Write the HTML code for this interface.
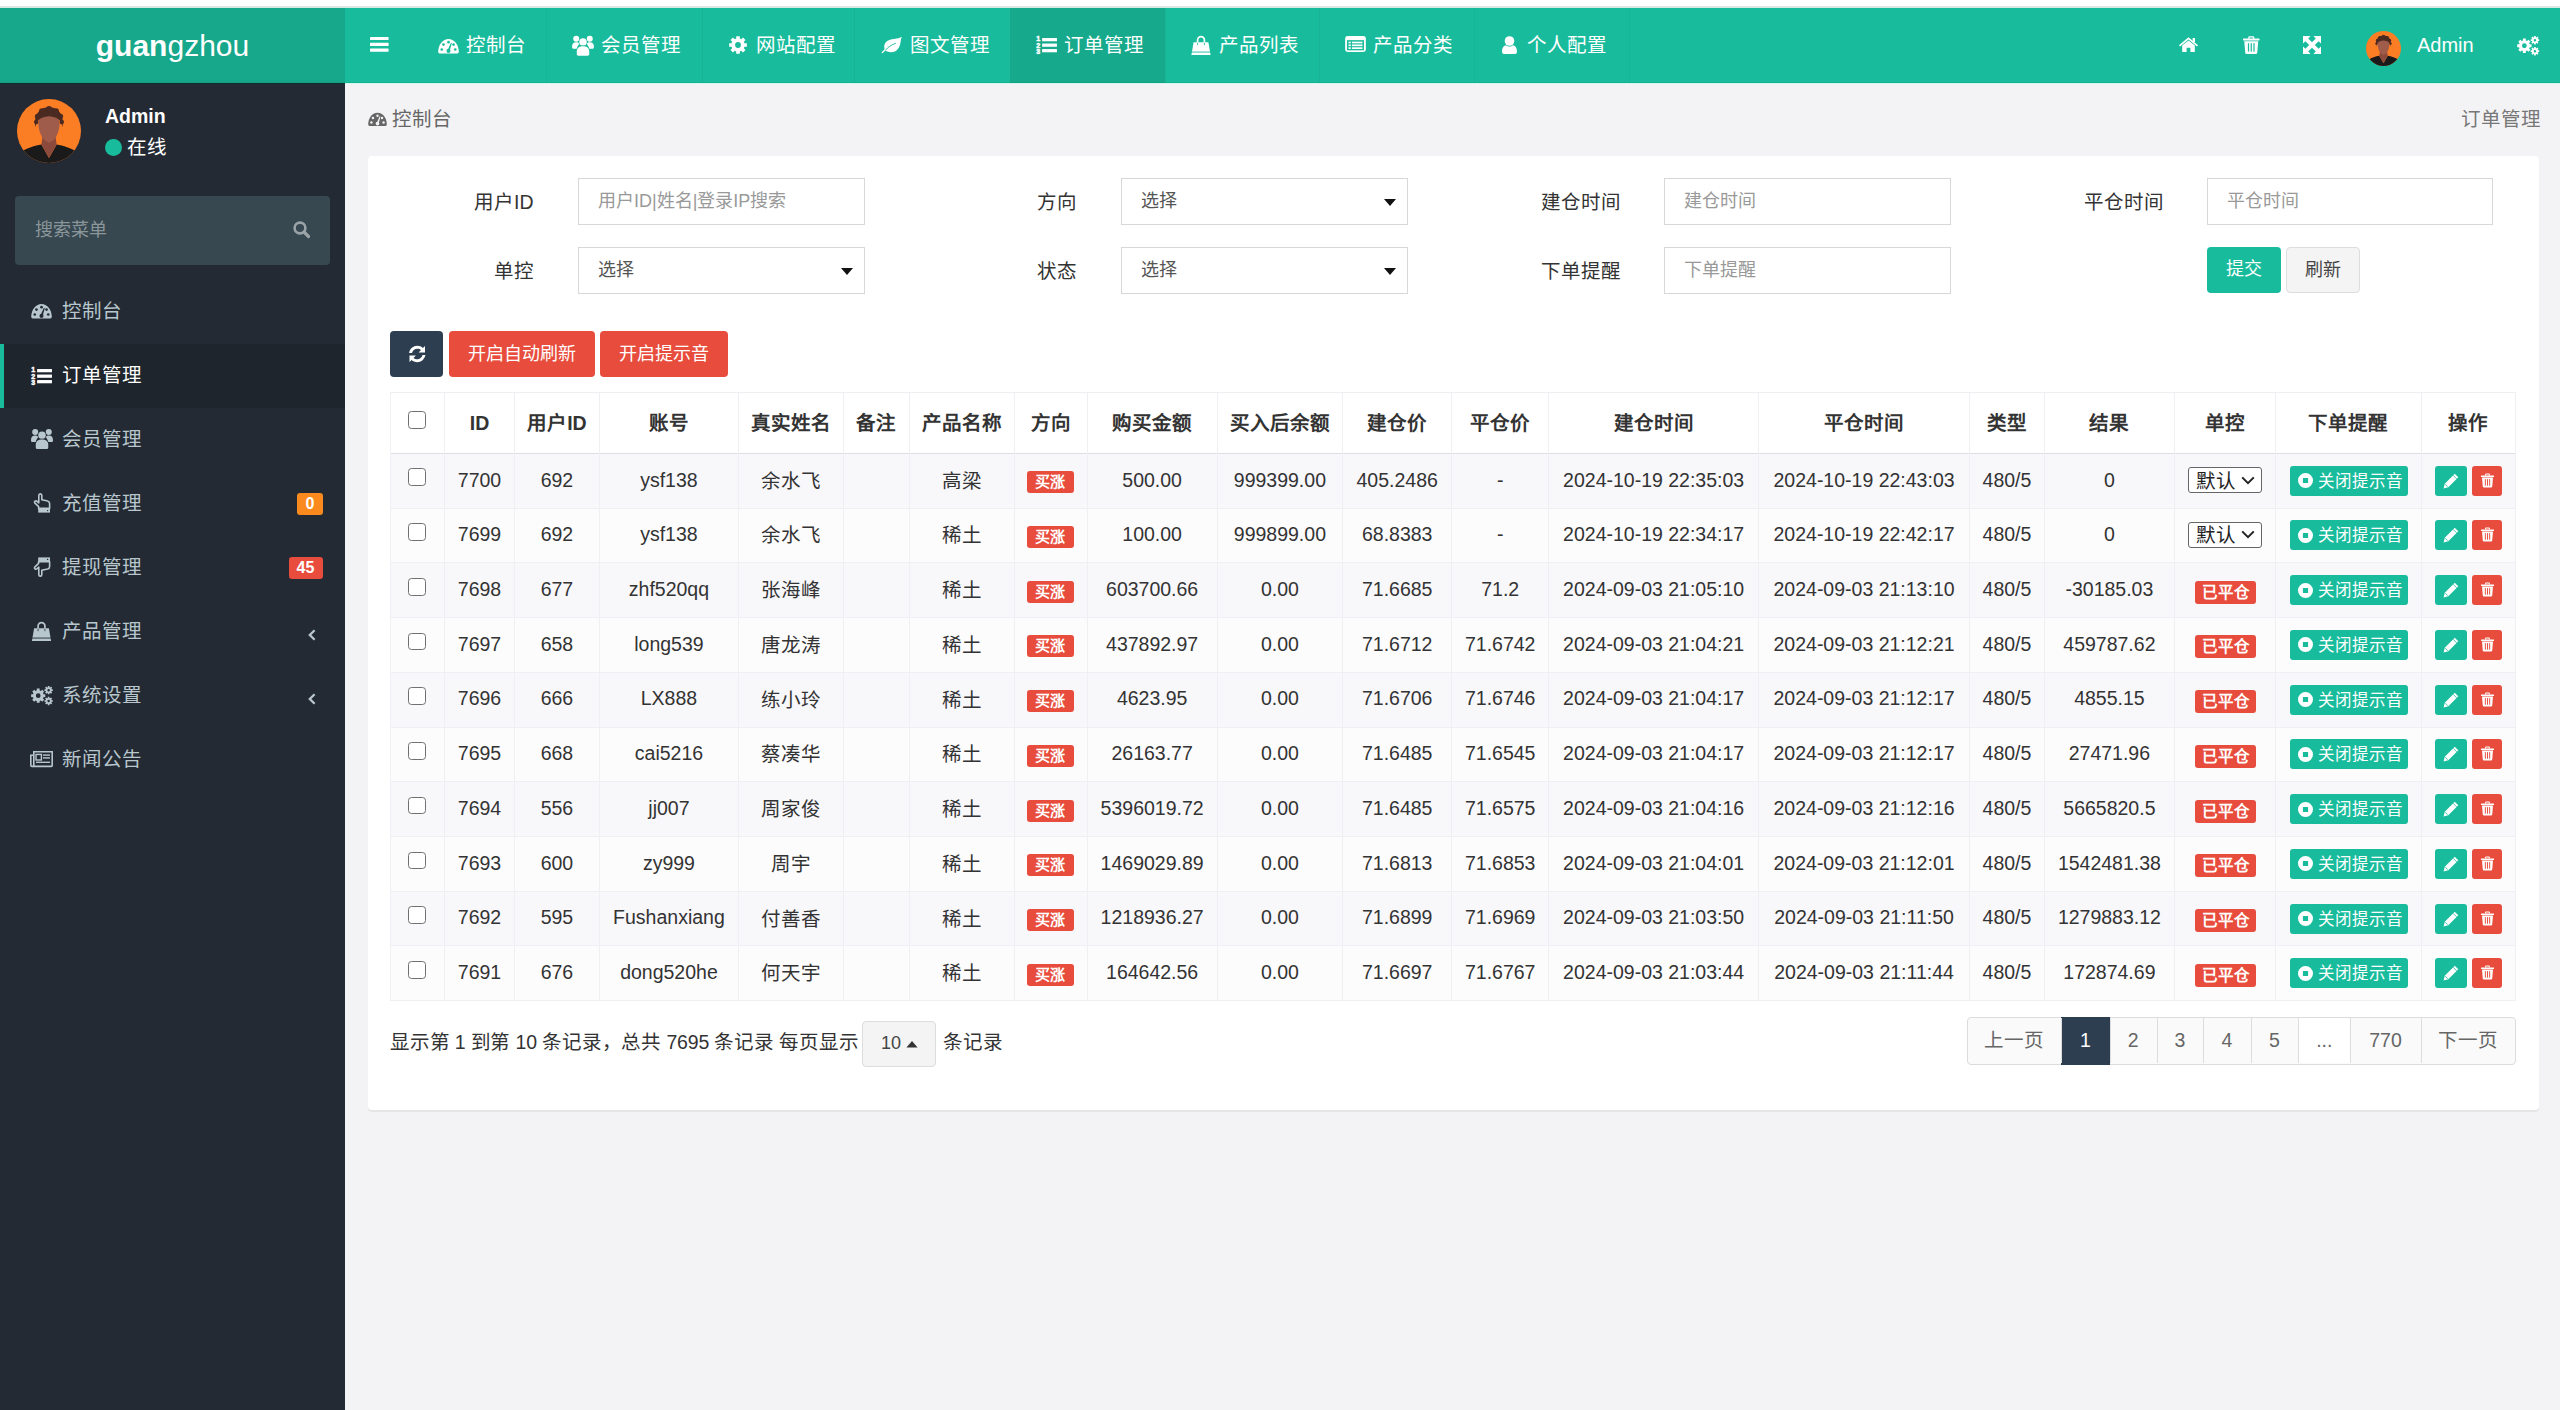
<!DOCTYPE html><html lang="zh-CN"><head><meta charset="utf-8"><title>订单管理</title><style>
*{box-sizing:border-box;margin:0;padding:0}
html,body{width:2560px;height:1410px;overflow:hidden}
body{font-family:"Liberation Sans",sans-serif;font-size:19.5px;color:#333;background:#f3f3f5;position:relative}
.a{position:absolute}
.t{position:absolute;white-space:nowrap}
</style></head><body>
<div class="a" style="left:0;top:0;width:2560px;height:8px;background:#fff"></div>
<div class="a" style="left:0;top:6px;width:2560px;height:1px;background:#e2e2e2"></div>
<div class="a" style="left:0;top:7px;width:2560px;height:1px;background:#cfeee7"></div>
<div class="a" style="left:0;top:8px;width:345px;height:75px;background:#17a78a"></div>
<div class="a" style="left:345px;top:8px;width:2215px;height:75px;background:#18bc9c"></div>
<div class="a" style="left:1010px;top:8px;width:155px;height:75px;background:#16a98c"></div>
<div class="a" style="left:546px;top:8px;width:1px;height:75px;background:rgba(0,0,0,0.035)"></div>
<div class="a" style="left:702px;top:8px;width:1px;height:75px;background:rgba(0,0,0,0.035)"></div>
<div class="a" style="left:854px;top:8px;width:1px;height:75px;background:rgba(0,0,0,0.035)"></div>
<div class="a" style="left:1165px;top:8px;width:1px;height:75px;background:rgba(0,0,0,0.035)"></div>
<div class="a" style="left:1319px;top:8px;width:1px;height:75px;background:rgba(0,0,0,0.035)"></div>
<div class="a" style="left:1474px;top:8px;width:1px;height:75px;background:rgba(0,0,0,0.035)"></div>
<div class="a" style="left:1629px;top:8px;width:1px;height:75px;background:rgba(0,0,0,0.035)"></div>
<div class="t" style="left:0;top:8px;width:345px;text-align:center;color:#fff;font-size:30px;line-height:75px"><b>guan</b>gzhou</div>
<div class="a" style="left:369.6px;top:37.4px"><svg width="18.6" height="14.7" viewBox="0 0 18.6 14.7" style="display:block;overflow:visible" ><g fill="#fff"><rect x="0" y="0" width="18.6" height="3.1" rx="0.5"/><rect x="0" y="5.8" width="18.6" height="3.1" rx="0.5"/><rect x="0" y="11.6" width="18.6" height="3.1" rx="0.5"/></g></svg></div>
<div class="a" style="left:437.7px;top:37.7px"><svg width="21" height="16" viewBox="0 0 28 21" style="display:block;overflow:visible" ><path fill="#fff" d="M2.2 20.6 Q0.2 20.6 0.3 17.5 C0.8 7.6 6.8 1 14 1 C21.2 1 27.2 7.6 27.7 17.5 Q27.8 20.6 25.8 20.6 Z"/><circle cx="5" cy="15.2" r="1.75" fill="#18bc9c"/><circle cx="7.3" cy="8.6" r="1.75" fill="#18bc9c"/><circle cx="14" cy="5.4" r="1.75" fill="#18bc9c"/><circle cx="20.7" cy="8.6" r="1.75" fill="#18bc9c"/><circle cx="23" cy="15.2" r="1.75" fill="#18bc9c"/><path fill="#18bc9c" d="M12.6 16.6 L17.2 6.2 L18.4 6.7 L15.4 17.4 Z"/><circle cx="14" cy="17" r="2.7" fill="#18bc9c"/></svg></div>
<div class="t" style="left:465.8px;top:34px;color:#fff;font-size:19.5px;line-height:22px">控制台</div>
<div class="a" style="left:571.7px;top:34.5px"><svg width="22" height="21" viewBox="0 0 24 23" style="display:block;overflow:visible" ><g fill="#fff"><circle cx="4.6" cy="4.2" r="3.3"/><circle cx="19.4" cy="4.2" r="3.3"/><path d="M0 13 C0 9.5 1.8 8 4.6 8 C6.5 8 7.6 8.6 8.4 9.5 C6.6 10.8 5.6 12.6 5.4 15 H1.2 C.4 15 0 14.2 0 13 Z"/><path d="M24 13 C24 9.5 22.2 8 19.4 8 C17.5 8 16.4 8.6 15.6 9.5 C17.4 10.8 18.4 12.6 18.6 15 H22.8 C23.6 15 24 14.2 24 13 Z"/></g><circle cx="12" cy="7.6" r="4.9" fill="#18bc9c"/><circle cx="12" cy="7.6" r="4.1" fill="#fff"/><path fill="#18bc9c" d="M4.4 23 V18 C4.4 13.6 7.4 11.4 12 11.4 C16.6 11.4 19.6 13.6 19.6 18 V23 Z"/><path fill="#fff" d="M5.2 21.2 V18 C5.2 14.3 7.8 12.3 12 12.3 C16.2 12.3 18.8 14.3 18.8 18 V21.2 Q18.8 22.8 17.2 22.8 H6.8 Q5.2 22.8 5.2 21.2 Z"/></svg></div>
<div class="t" style="left:600.9px;top:34px;color:#fff;font-size:19.5px;line-height:22px">会员管理</div>
<div class="a" style="left:728.8px;top:35.9px"><svg width="18" height="18" viewBox="0 0 20 20" style="display:block;overflow:visible" ><path fill="#fff" fill-rule="evenodd" d="M7.99 2.88 L8.05 0.19 L11.95 0.19 L12.01 2.88 L13.62 3.54 L15.56 1.69 L18.31 4.44 L16.46 6.38 L17.12 7.99 L19.81 8.05 L19.81 11.95 L17.12 12.01 L16.46 13.62 L18.31 15.56 L15.56 18.31 L13.62 16.46 L12.01 17.12 L11.95 19.81 L8.05 19.81 L7.99 17.12 L6.38 16.46 L4.44 18.31 L1.69 15.56 L3.54 13.62 L2.88 12.01 L0.19 11.95 L0.19 8.05 L2.88 7.99 L3.54 6.38 L1.69 4.44 L4.44 1.69 L6.38 3.54 Z M6.80 10.00 a3.20 3.20 0 1 0 6.40 0 a3.20 3.20 0 1 0 -6.40 0 Z"/></svg></div>
<div class="t" style="left:755.6px;top:34px;color:#fff;font-size:19.5px;line-height:22px">网站配置</div>
<div class="a" style="left:881.4px;top:36px"><svg width="21" height="18" viewBox="0 0 24 21" style="display:block;overflow:visible" ><path fill="#fff" d="M24 1 C22 2.5 19 3 15 3.4 C8 4 3.5 7 3.5 12.5 C3.5 13.6 3.7 14.6 4 15.5 C2.8 16.6 1.6 17.8 0.6 19 C0.2 19.6 0.8 20.4 1.6 20 C2.6 19 3.8 18 5.2 17 C6.8 18.4 9 19 11.4 19 C18.5 19 22 13 22.6 7 C22.9 4.6 23.4 2.6 24 1 Z"/><path fill="none" stroke="#18bc9c" stroke-width="1.1" d="M5 16.5 C8 13 11.5 10.5 17 8.5"/></svg></div>
<div class="t" style="left:909.7px;top:34px;color:#fff;font-size:19.5px;line-height:22px">图文管理</div>
<div class="a" style="left:1036.3px;top:35.4px"><svg width="21" height="19" viewBox="0 0 22 20" style="display:block;overflow:visible" ><g fill="#fff"><rect x="6.4" y="3.2" width="15.6" height="3.4"/><rect x="6.4" y="9" width="15.6" height="3.4"/><rect x="6.4" y="14.8" width="15.6" height="3.4"/><g font-size="7.4" font-weight="bold" font-family="Liberation Sans" stroke="#fff" stroke-width="0.5"><text x="0.2" y="6.8">1</text><text x="0.2" y="13.3">2</text><text x="0.2" y="19.8">3</text></g></g></svg></div>
<div class="t" style="left:1064.4px;top:34px;color:#fff;font-size:19.5px;line-height:22px">订单管理</div>
<div class="a" style="left:1190.7px;top:34.7px"><svg width="20" height="20" viewBox="0 0 20 20" style="display:block;overflow:visible" ><path fill="#fff" d="M2.6 7.2 H17.4 L19.6 20 H0.4 Z"/><path fill="none" stroke="#fff" stroke-width="1.7" d="M6.6 10 V5 A3.4 3.4 0 0 1 13.4 5 V10"/><path fill="none" stroke="#18bc9c" stroke-width="0.8" d="M6.6 7.6 V10.2 M13.4 7.6 V10.2"/><rect x="0.6" y="16.6" width="18.8" height="0.9" fill="#18bc9c"/></svg></div>
<div class="t" style="left:1219px;top:34px;color:#fff;font-size:19.5px;line-height:22px">产品列表</div>
<div class="a" style="left:1345.2px;top:36.1px"><svg width="21" height="16" viewBox="0 0 22 17" style="display:block;overflow:visible" ><rect x="0" y="0" width="22" height="17" rx="2.6" fill="#fff"/><rect x="2" y="4.4" width="18" height="10.8" fill="#18bc9c"/><g fill="#fff"><rect x="3.6" y="6" width="2.4" height="1.8"/><rect x="7.2" y="6" width="11.2" height="1.8"/><rect x="3.6" y="9" width="2.4" height="1.8"/><rect x="7.2" y="9" width="11.2" height="1.8"/><rect x="3.6" y="12" width="2.4" height="1.8"/><rect x="7.2" y="12" width="11.2" height="1.8"/></g></svg></div>
<div class="t" style="left:1373px;top:34px;color:#fff;font-size:19.5px;line-height:22px">产品分类</div>
<div class="a" style="left:1502.2px;top:36.1px"><svg width="15" height="18" viewBox="0 0 15 18" style="display:block;overflow:visible" ><g fill="#fff"><circle cx="7.5" cy="5" r="4.8"/><path d="M0 15.5 C0 11.5 2 9.6 4 9.2 C5 10 6.2 10.5 7.5 10.5 S10 10 11 9.2 C13 9.6 15 11.5 15 15.5 Q15 18 13 18 H2 Q0 18 0 15.5 Z"/></g></svg></div>
<div class="t" style="left:1527.2px;top:34px;color:#fff;font-size:19.5px;line-height:22px">个人配置</div>
<div class="a" style="left:2178.8px;top:36.9px"><svg width="19" height="15" viewBox="0 0 19 15" style="display:block;overflow:visible" ><path fill="#fff" d="M3.2 8.6 L9.5 3.4 L15.8 8.6 V15 H11.4 V10.8 H7.6 V15 H3.2 Z"/><path fill="none" stroke="#fff" stroke-width="1.7" d="M0.5 8.9 L9.5 1.4 L18.5 8.9"/><rect x="13.6" y="1" width="2.4" height="4" fill="#fff"/></svg></div>
<div class="a" style="left:2242.5px;top:36px"><svg width="16.5" height="18" viewBox="0 0 16.5 18" style="display:block;overflow:visible" ><g fill="#fff"><rect x="0" y="2.6" width="16.5" height="1.9" rx="0.4"/><path d="M5.2 2.8 V1.4 Q5.2 0.2 6.4 0.2 H10.1 Q11.3 0.2 11.3 1.4 V2.8 H9.9 V1.5 H6.6 V2.8 Z"/><path d="M1.3 5.2 H15.2 L14.3 16.4 Q14.2 18 12.6 18 H3.9 Q2.3 18 2.2 16.4 Z"/></g><g fill="#18bc9c"><rect x="4.9" y="7.2" width="1.2" height="8.4"/><rect x="7.65" y="7.2" width="1.2" height="8.4"/><rect x="10.4" y="7.2" width="1.2" height="8.4"/></g></svg></div>
<div class="a" style="left:2302.8px;top:36px"><svg width="18" height="18" viewBox="0 0 18 18" style="display:block;overflow:visible" ><g fill="#fff"><path d="M0 0 H7.6 L5.2 2.4 L9 6.2 L12.8 2.4 L10.4 0 H18 V7.6 L15.6 5.2 L11.8 9 L15.6 12.8 L18 10.4 V18 H10.4 L12.8 15.6 L9 11.8 L5.2 15.6 L7.6 18 H0 V10.4 L2.4 12.8 L6.2 9 L2.4 5.2 L0 7.6 Z"/></g></svg></div>
<div class="a" style="left:2366px;top:31px"><svg width="35" height="35" viewBox="0 0 100 100" style="display:block"><defs><clipPath id="cph"><circle cx="50" cy="50" r="50"/></clipPath></defs><g clip-path="url(#cph)"><rect width="100" height="100" fill="#fb7d24"/><path d="M0 100 L4 84 C16 76 28 73 38 71 L50 92 L62 71 C72 73 84 76 96 84 L100 100 Z" fill="#1b1a1a"/><path d="M40 58 H60 L62 71 L50 92 L38 71 Z" fill="#8c4a3c"/><path d="M33.5 40 C33 26 41 23 50 23 C59 23 67 26 66.5 40 C66 52 60 66 50 68 C40 66 34 52 33.5 40 Z" fill="#a05c4b"/><path d="M29 44 C25 22 38 13 50 13 C62 13 75 22 71 44 C69 35 66 28 50 27 C34 28 31 35 29 44 Z" fill="#4b2a22"/><g fill="#4b2a22"><circle cx="30" cy="36" r="3.5"/><circle cx="32" cy="27" r="4"/><circle cx="39" cy="19" r="4.5"/><circle cx="50" cy="15.5" r="4.5"/><circle cx="61" cy="19" r="4.5"/><circle cx="68" cy="27" r="4"/><circle cx="70" cy="36" r="3.5"/></g></g></svg></div>
<div class="t" style="left:2417px;top:34px;color:#fff;font-size:20px;line-height:22px">Admin</div>
<div class="a" style="left:2517px;top:34.9px"><svg width="22.4" height="20.5" viewBox="0 0 23.2 21.3" style="display:block;overflow:visible" ><path fill="#fff" fill-rule="evenodd" d="M6.05 5.71 L6.12 3.75 L9.08 3.75 L9.15 5.71 L10.39 6.23 L11.82 4.88 L13.92 6.98 L12.57 8.41 L13.09 9.65 L15.05 9.72 L15.05 12.68 L13.09 12.75 L12.57 13.99 L13.92 15.42 L11.82 17.52 L10.39 16.17 L9.15 16.69 L9.08 18.65 L6.12 18.65 L6.05 16.69 L4.81 16.17 L3.38 17.52 L1.28 15.42 L2.63 13.99 L2.11 12.75 L0.15 12.68 L0.15 9.72 L2.11 9.65 L2.63 8.41 L1.28 6.98 L3.38 4.88 L4.81 6.23 Z M5.10 11.20 a2.50 2.50 0 1 0 5.00 0 a2.50 2.50 0 1 0 -5.00 0 Z M17.70 2.22 L17.72 0.99 L19.48 0.99 L19.50 2.22 L20.21 2.52 L21.10 1.66 L22.34 2.90 L21.48 3.79 L21.78 4.50 L23.01 4.52 L23.01 6.28 L21.78 6.30 L21.48 7.01 L22.34 7.90 L21.10 9.14 L20.21 8.28 L19.50 8.58 L19.48 9.81 L17.72 9.81 L17.70 8.58 L16.99 8.28 L16.10 9.14 L14.86 7.90 L15.72 7.01 L15.42 6.30 L14.19 6.28 L14.19 4.52 L15.42 4.50 L15.72 3.79 L14.86 2.90 L16.10 1.66 L16.99 2.52 Z M17.30 5.40 a1.30 1.30 0 1 0 2.60 0 a1.30 1.30 0 1 0 -2.60 0 Z M17.70 13.62 L17.72 12.39 L19.48 12.39 L19.50 13.62 L20.21 13.92 L21.10 13.06 L22.34 14.30 L21.48 15.19 L21.78 15.90 L23.01 15.92 L23.01 17.68 L21.78 17.70 L21.48 18.41 L22.34 19.30 L21.10 20.54 L20.21 19.68 L19.50 19.98 L19.48 21.21 L17.72 21.21 L17.70 19.98 L16.99 19.68 L16.10 20.54 L14.86 19.30 L15.72 18.41 L15.42 17.70 L14.19 17.68 L14.19 15.92 L15.42 15.90 L15.72 15.19 L14.86 14.30 L16.10 13.06 L16.99 13.92 Z M17.30 16.80 a1.30 1.30 0 1 0 2.60 0 a1.30 1.30 0 1 0 -2.60 0 Z"/></svg></div>
<div class="a" style="left:0;top:83px;width:345px;height:1327px;background:#242a33"></div>
<div class="a" style="left:345px;top:83px;width:2215px;height:1px;background:#d4f6ef"></div>
<div class="a" style="left:0;top:83px;width:345px;height:1px;background:#10302f"></div>
<div class="a" style="left:0;top:82px;width:2560px;height:1px;background:rgba(0,0,0,0.05)"></div>
<div class="a" style="left:17px;top:99px"><svg width="64" height="64" viewBox="0 0 100 100" style="display:block"><defs><clipPath id="cps"><circle cx="50" cy="50" r="50"/></clipPath></defs><g clip-path="url(#cps)"><rect width="100" height="100" fill="#fb7d24"/><path d="M0 100 L4 84 C16 76 28 73 38 71 L50 92 L62 71 C72 73 84 76 96 84 L100 100 Z" fill="#1b1a1a"/><path d="M40 58 H60 L62 71 L50 92 L38 71 Z" fill="#8c4a3c"/><path d="M33.5 40 C33 26 41 23 50 23 C59 23 67 26 66.5 40 C66 52 60 66 50 68 C40 66 34 52 33.5 40 Z" fill="#a05c4b"/><path d="M29 44 C25 22 38 13 50 13 C62 13 75 22 71 44 C69 35 66 28 50 27 C34 28 31 35 29 44 Z" fill="#4b2a22"/><g fill="#4b2a22"><circle cx="30" cy="36" r="3.5"/><circle cx="32" cy="27" r="4"/><circle cx="39" cy="19" r="4.5"/><circle cx="50" cy="15.5" r="4.5"/><circle cx="61" cy="19" r="4.5"/><circle cx="68" cy="27" r="4"/><circle cx="70" cy="36" r="3.5"/></g></g></svg></div>
<div class="t" style="left:105px;top:103.5px;color:#fff;font-weight:bold;font-size:19.5px;line-height:24px">Admin</div>
<div class="a" style="left:105px;top:139px;width:17px;height:17px;border-radius:50%;background:#18bc9c"></div>
<div class="t" style="left:127px;top:136px;color:#fff;font-size:19.5px;line-height:22px">在线</div>
<div class="a" style="left:15px;top:196px;width:315px;height:69px;background:#374850;border-radius:4px"></div>
<div class="t" style="left:35px;top:219px;color:#8b969b;font-size:18px;line-height:22px">搜索菜单</div>
<div class="a" style="left:293px;top:221px"><svg width="17" height="17" viewBox="0 0 17 17" style="display:block;overflow:visible" ><circle cx="7" cy="7" r="5.4" fill="none" stroke="#9aa4a8" stroke-width="2.6"/><path d="M11 11 L15.5 15.5" stroke="#9aa4a8" stroke-width="3.2" stroke-linecap="round"/></svg></div>
<div class="a" style="left:31px;top:303.0px"><svg width="21" height="16" viewBox="0 0 28 21" style="display:block;overflow:visible" ><path fill="#b8c7ce" d="M2.2 20.6 Q0.2 20.6 0.3 17.5 C0.8 7.6 6.8 1 14 1 C21.2 1 27.2 7.6 27.7 17.5 Q27.8 20.6 25.8 20.6 Z"/><circle cx="5" cy="15.2" r="1.75" fill="#242a33"/><circle cx="7.3" cy="8.6" r="1.75" fill="#242a33"/><circle cx="14" cy="5.4" r="1.75" fill="#242a33"/><circle cx="20.7" cy="8.6" r="1.75" fill="#242a33"/><circle cx="23" cy="15.2" r="1.75" fill="#242a33"/><path fill="#242a33" d="M12.6 16.6 L17.2 6.2 L18.4 6.7 L15.4 17.4 Z"/><circle cx="14" cy="17" r="2.7" fill="#242a33"/></svg></div>
<div class="t" style="left:62px;top:300.0px;color:#b8c7ce;font-size:19.5px;line-height:22px">控制台</div>
<div class="a" style="left:0;top:343.5px;width:345px;height:64px;background:#1f252c"></div>
<div class="a" style="left:0;top:343.5px;width:4px;height:64px;background:#18bc9c"></div>
<div class="a" style="left:31px;top:365.5px"><svg width="21" height="19" viewBox="0 0 22 20" style="display:block;overflow:visible" ><g fill="#fff"><rect x="6.4" y="3.2" width="15.6" height="3.4"/><rect x="6.4" y="9" width="15.6" height="3.4"/><rect x="6.4" y="14.8" width="15.6" height="3.4"/><g font-size="7.4" font-weight="bold" font-family="Liberation Sans" stroke="#fff" stroke-width="0.5"><text x="0.2" y="6.8">1</text><text x="0.2" y="13.3">2</text><text x="0.2" y="19.8">3</text></g></g></svg></div>
<div class="t" style="left:62px;top:364.0px;color:#fff;font-size:19.5px;line-height:22px">订单管理</div>
<div class="a" style="left:31px;top:428.25px"><svg width="22" height="21.5" viewBox="0 0 24 23" style="display:block;overflow:visible" ><g fill="#b8c7ce"><circle cx="4.6" cy="4.2" r="3.3"/><circle cx="19.4" cy="4.2" r="3.3"/><path d="M0 13 C0 9.5 1.8 8 4.6 8 C6.5 8 7.6 8.6 8.4 9.5 C6.6 10.8 5.6 12.6 5.4 15 H1.2 C.4 15 0 14.2 0 13 Z"/><path d="M24 13 C24 9.5 22.2 8 19.4 8 C17.5 8 16.4 8.6 15.6 9.5 C17.4 10.8 18.4 12.6 18.6 15 H22.8 C23.6 15 24 14.2 24 13 Z"/></g><circle cx="12" cy="7.6" r="4.9" fill="#242a33"/><circle cx="12" cy="7.6" r="4.1" fill="#b8c7ce"/><path fill="#242a33" d="M4.4 23 V18 C4.4 13.6 7.4 11.4 12 11.4 C16.6 11.4 19.6 13.6 19.6 18 V23 Z"/><path fill="#b8c7ce" d="M5.2 21.2 V18 C5.2 14.3 7.8 12.3 12 12.3 C16.2 12.3 18.8 14.3 18.8 18 V21.2 Q18.8 22.8 17.2 22.8 H6.8 Q5.2 22.8 5.2 21.2 Z"/></svg></div>
<div class="t" style="left:62px;top:428.0px;color:#b8c7ce;font-size:19.5px;line-height:22px">会员管理</div>
<div class="a" style="left:33px;top:493.0px"><svg width="18" height="20" viewBox="0 0 18 20" style="display:block;overflow:visible" ><path fill="none" stroke="#b8c7ce" stroke-width="1.6" stroke-linejoin="round" d="M5.6 13.6 L2 10.2 Q1 9 2 8.2 Q3 7.4 4.2 8.4 L5.8 9.8 V2.6 Q5.8 0.9 7.3 0.9 Q8.8 0.9 8.8 2.6 V6.8 L14.6 8 Q16.6 8.5 16.6 10.6 V15.4 H5.6 Z"/><rect x="5.2" y="15.6" width="11.8" height="4" fill="#b8c7ce"/><circle cx="14.6" cy="17.6" r="0.7" fill="#242a33"/></svg></div>
<div class="t" style="left:62px;top:492.0px;color:#b8c7ce;font-size:19.5px;line-height:22px">充值管理</div>
<div class="t" style="left:297px;top:492.5px;width:26px;height:22px;border-radius:3px;background:#fb8a1e;color:#fff;font-weight:bold;font-size:16px;line-height:22px;text-align:center">0</div>
<div class="a" style="left:33px;top:557.0px"><svg width="18" height="20" viewBox="0 0 18 20" style="display:block;overflow:visible" ><g transform="translate(0,20) scale(1,-1)"><path fill="none" stroke="#b8c7ce" stroke-width="1.6" stroke-linejoin="round" d="M5.6 13.6 L2 10.2 Q1 9 2 8.2 Q3 7.4 4.2 8.4 L5.8 9.8 V2.6 Q5.8 0.9 7.3 0.9 Q8.8 0.9 8.8 2.6 V6.8 L14.6 8 Q16.6 8.5 16.6 10.6 V15.4 H5.6 Z"/><rect x="5.2" y="15.6" width="11.8" height="4" fill="#b8c7ce"/><circle cx="14.6" cy="17.6" r="0.7" fill="#242a33"/></g></svg></div>
<div class="t" style="left:62px;top:556.0px;color:#b8c7ce;font-size:19.5px;line-height:22px">提现管理</div>
<div class="t" style="left:288.5px;top:556.5px;width:34px;height:22px;border-radius:3px;background:#e74c3c;color:#fff;font-weight:bold;font-size:16px;line-height:22px;text-align:center">45</div>
<div class="a" style="left:31px;top:621.0px"><svg width="21" height="20" viewBox="0 0 20 20" style="display:block;overflow:visible" ><path fill="#b8c7ce" d="M2.6 7.2 H17.4 L19.6 20 H0.4 Z"/><path fill="none" stroke="#b8c7ce" stroke-width="1.7" d="M6.6 10 V5 A3.4 3.4 0 0 1 13.4 5 V10"/><path fill="none" stroke="#242a33" stroke-width="0.8" d="M6.6 7.6 V10.2 M13.4 7.6 V10.2"/><rect x="0.6" y="16.6" width="18.8" height="0.9" fill="#242a33"/></svg></div>
<div class="t" style="left:62px;top:620.0px;color:#b8c7ce;font-size:19.5px;line-height:22px">产品管理</div>
<div class="a" style="left:307.5px;top:628.5px"><svg width="8" height="12" viewBox="0 0 8 12" style="display:block"><path d="M6.6 1.2L1.8 6l4.8 4.8" fill="none" stroke="#b8c7ce" stroke-width="2.3"/></svg></div>
<div class="a" style="left:31px;top:684.85px"><svg width="22" height="20.3" viewBox="0 0 23.2 21.3" style="display:block;overflow:visible" ><path fill="#b8c7ce" fill-rule="evenodd" d="M6.05 5.71 L6.12 3.75 L9.08 3.75 L9.15 5.71 L10.39 6.23 L11.82 4.88 L13.92 6.98 L12.57 8.41 L13.09 9.65 L15.05 9.72 L15.05 12.68 L13.09 12.75 L12.57 13.99 L13.92 15.42 L11.82 17.52 L10.39 16.17 L9.15 16.69 L9.08 18.65 L6.12 18.65 L6.05 16.69 L4.81 16.17 L3.38 17.52 L1.28 15.42 L2.63 13.99 L2.11 12.75 L0.15 12.68 L0.15 9.72 L2.11 9.65 L2.63 8.41 L1.28 6.98 L3.38 4.88 L4.81 6.23 Z M5.10 11.20 a2.50 2.50 0 1 0 5.00 0 a2.50 2.50 0 1 0 -5.00 0 Z M17.70 2.22 L17.72 0.99 L19.48 0.99 L19.50 2.22 L20.21 2.52 L21.10 1.66 L22.34 2.90 L21.48 3.79 L21.78 4.50 L23.01 4.52 L23.01 6.28 L21.78 6.30 L21.48 7.01 L22.34 7.90 L21.10 9.14 L20.21 8.28 L19.50 8.58 L19.48 9.81 L17.72 9.81 L17.70 8.58 L16.99 8.28 L16.10 9.14 L14.86 7.90 L15.72 7.01 L15.42 6.30 L14.19 6.28 L14.19 4.52 L15.42 4.50 L15.72 3.79 L14.86 2.90 L16.10 1.66 L16.99 2.52 Z M17.30 5.40 a1.30 1.30 0 1 0 2.60 0 a1.30 1.30 0 1 0 -2.60 0 Z M17.70 13.62 L17.72 12.39 L19.48 12.39 L19.50 13.62 L20.21 13.92 L21.10 13.06 L22.34 14.30 L21.48 15.19 L21.78 15.90 L23.01 15.92 L23.01 17.68 L21.78 17.70 L21.48 18.41 L22.34 19.30 L21.10 20.54 L20.21 19.68 L19.50 19.98 L19.48 21.21 L17.72 21.21 L17.70 19.98 L16.99 19.68 L16.10 20.54 L14.86 19.30 L15.72 18.41 L15.42 17.70 L14.19 17.68 L14.19 15.92 L15.42 15.90 L15.72 15.19 L14.86 14.30 L16.10 13.06 L16.99 13.92 Z M17.30 16.80 a1.30 1.30 0 1 0 2.60 0 a1.30 1.30 0 1 0 -2.60 0 Z"/></svg></div>
<div class="t" style="left:62px;top:684.0px;color:#b8c7ce;font-size:19.5px;line-height:22px">系统设置</div>
<div class="a" style="left:307.5px;top:692.5px"><svg width="8" height="12" viewBox="0 0 8 12" style="display:block"><path d="M6.6 1.2L1.8 6l4.8 4.8" fill="none" stroke="#b8c7ce" stroke-width="2.3"/></svg></div>
<div class="a" style="left:30px;top:750.9px"><svg width="23" height="16.2" viewBox="0 0 23 16.2" style="display:block;overflow:visible" ><path fill="none" stroke="#b8c7ce" stroke-width="1.6" d="M3.8 0.8 H22.2 V14.6 Q22.2 15.4 21.4 15.4 H2 Q0.8 15.4 0.8 14.2 V4.2 H3.8 Z M3.8 4.2 V14.6"/><g fill="#b8c7ce"><rect x="6" y="3.4" width="5.4" height="5.6" fill="none" stroke="#b8c7ce" stroke-width="1.4"/><rect x="13" y="3.4" width="7" height="1.4"/><rect x="13" y="6.2" width="7" height="1.4"/><rect x="6" y="10.6" width="14" height="1.4"/></g></svg></div>
<div class="t" style="left:62px;top:748.0px;color:#b8c7ce;font-size:19.5px;line-height:22px">新闻公告</div>
<div class="a" style="left:368px;top:111.5px"><svg width="19" height="14.5" viewBox="0 0 28 21" style="display:block;overflow:visible" ><path fill="#666" d="M2.2 20.6 Q0.2 20.6 0.3 17.5 C0.8 7.6 6.8 1 14 1 C21.2 1 27.2 7.6 27.7 17.5 Q27.8 20.6 25.8 20.6 Z"/><circle cx="5" cy="15.2" r="1.75" fill="#f3f3f5"/><circle cx="7.3" cy="8.6" r="1.75" fill="#f3f3f5"/><circle cx="14" cy="5.4" r="1.75" fill="#f3f3f5"/><circle cx="20.7" cy="8.6" r="1.75" fill="#f3f3f5"/><circle cx="23" cy="15.2" r="1.75" fill="#f3f3f5"/><path fill="#f3f3f5" d="M12.6 16.6 L17.2 6.2 L18.4 6.7 L15.4 17.4 Z"/><circle cx="14" cy="17" r="2.7" fill="#f3f3f5"/></svg></div>
<div class="t" style="left:392px;top:107px;color:#666;font-size:19.5px;line-height:24px">控制台</div>
<div class="t" style="left:2461px;top:107px;color:#777;font-size:19.5px;line-height:24px">订单管理</div>
<div class="a" style="left:368px;top:156px;width:2171px;height:953.5px;background:#fff;border-radius:4px;box-shadow:0 1.5px 1px rgba(0,0,0,0.06)"></div>
<div class="t" style="left:333.5px;width:200px;top:190px;text-align:right;color:#333;font-size:19.5px;line-height:24px">用户ID</div>
<div class="a" style="left:578px;top:178px;width:287px;height:46.5px;border:1px solid #d8d8d8;background:#fff"><div class="t" style="left:19px;top:10.5px;color:#999;font-size:18px;line-height:22px">用户ID|姓名|登录IP搜索</div></div>
<div class="t" style="left:876.5px;width:200px;top:190px;text-align:right;color:#333;font-size:19.5px;line-height:24px">方向</div>
<div class="a" style="left:1121px;top:178px;width:287px;height:46.5px;border:1px solid #d8d8d8;background:#fff"><div class="t" style="left:19px;top:10.5px;color:#555;font-size:18px;line-height:22px">选择</div><div class="a" style="right:11.5px;top:19.5px;width:0;height:0;border-left:6px solid transparent;border-right:6px solid transparent;border-top:7px solid #111"></div></div>
<div class="t" style="left:1420.5px;width:200px;top:190px;text-align:right;color:#333;font-size:19.5px;line-height:24px">建仓时间</div>
<div class="a" style="left:1664px;top:178px;width:287px;height:46.5px;border:1px solid #d8d8d8;background:#fff"><div class="t" style="left:19px;top:10.5px;color:#999;font-size:18px;line-height:22px">建仓时间</div></div>
<div class="t" style="left:1963.5px;width:200px;top:190px;text-align:right;color:#333;font-size:19.5px;line-height:24px">平仓时间</div>
<div class="a" style="left:2207px;top:178px;width:286px;height:46.5px;border:1px solid #d8d8d8;background:#fff"><div class="t" style="left:19px;top:10.5px;color:#999;font-size:18px;line-height:22px">平仓时间</div></div>
<div class="t" style="left:333.5px;width:200px;top:259px;text-align:right;color:#333;font-size:19.5px;line-height:24px">单控</div>
<div class="a" style="left:578px;top:247px;width:287px;height:46.5px;border:1px solid #d8d8d8;background:#fff"><div class="t" style="left:19px;top:10.5px;color:#555;font-size:18px;line-height:22px">选择</div><div class="a" style="right:11.5px;top:19.5px;width:0;height:0;border-left:6px solid transparent;border-right:6px solid transparent;border-top:7px solid #111"></div></div>
<div class="t" style="left:876.5px;width:200px;top:259px;text-align:right;color:#333;font-size:19.5px;line-height:24px">状态</div>
<div class="a" style="left:1121px;top:247px;width:287px;height:46.5px;border:1px solid #d8d8d8;background:#fff"><div class="t" style="left:19px;top:10.5px;color:#555;font-size:18px;line-height:22px">选择</div><div class="a" style="right:11.5px;top:19.5px;width:0;height:0;border-left:6px solid transparent;border-right:6px solid transparent;border-top:7px solid #111"></div></div>
<div class="t" style="left:1420.5px;width:200px;top:259px;text-align:right;color:#333;font-size:19.5px;line-height:24px">下单提醒</div>
<div class="a" style="left:1664px;top:247px;width:287px;height:46.5px;border:1px solid #d8d8d8;background:#fff"><div class="t" style="left:19px;top:10.5px;color:#999;font-size:18px;line-height:22px">下单提醒</div></div>
<div class="t" style="left:2207px;top:247px;width:74px;height:46px;background:#18bc9c;border-radius:4px;color:#fff;text-align:center;line-height:44px;font-size:18px">提交</div>
<div class="t" style="left:2286px;top:247px;width:74px;height:46px;background:#f4f4f4;border:1px solid #ddd;border-radius:4px;color:#444;text-align:center;line-height:44px;font-size:18px">刷新</div>
<div class="a" style="left:390px;top:331px;width:53px;height:46px;background:#2c3e50;border-radius:4px"></div>
<div class="a" style="left:407.5px;top:345px"><svg width="18.5" height="18" viewBox="0 0 18.5 18" style="display:block;overflow:visible" ><g fill="#fff"><path d="M17 1 V7.4 H10.6 L13 5 C12 4.2 10.7 3.7 9.3 3.7 C6.7 3.7 4.6 5.5 4 8 H1.1 C1.8 3.9 5.2 0.8 9.3 0.8 C11.5 0.8 13.4 1.6 14.9 3 Z"/><path d="M1.5 17 V10.6 H7.9 L5.5 13 C6.5 13.8 7.8 14.3 9.2 14.3 C11.8 14.3 13.9 12.5 14.5 10 H17.4 C16.7 14.1 13.3 17.2 9.2 17.2 C7 17.2 5.1 16.4 3.6 15 Z"/></g></svg></div>
<div class="t" style="left:449px;top:331px;width:146px;height:46px;background:#e74c3c;border-radius:4px;color:#fff;text-align:center;line-height:46px;font-size:18px">开启自动刷新</div>
<div class="t" style="left:600px;top:331px;width:128px;height:46px;background:#e74c3c;border-radius:4px;color:#fff;text-align:center;line-height:46px;font-size:18px">开启提示音</div>
<div class="a" style="left:390.5px;top:453.4px;width:2124.9px;height:54.73px;background:#f8f7fa"></div>
<div class="a" style="left:390.5px;top:508.13px;width:2124.9px;height:54.73px;background:#fdfcfd"></div>
<div class="a" style="left:390.5px;top:562.86px;width:2124.9px;height:54.73px;background:#f8f7fa"></div>
<div class="a" style="left:390.5px;top:617.5899999999999px;width:2124.9px;height:54.73px;background:#fdfcfd"></div>
<div class="a" style="left:390.5px;top:672.3199999999999px;width:2124.9px;height:54.73px;background:#f8f7fa"></div>
<div class="a" style="left:390.5px;top:727.05px;width:2124.9px;height:54.73px;background:#fdfcfd"></div>
<div class="a" style="left:390.5px;top:781.78px;width:2124.9px;height:54.73px;background:#f8f7fa"></div>
<div class="a" style="left:390.5px;top:836.51px;width:2124.9px;height:54.73px;background:#fdfcfd"></div>
<div class="a" style="left:390.5px;top:891.24px;width:2124.9px;height:54.73px;background:#f8f7fa"></div>
<div class="a" style="left:390.5px;top:945.97px;width:2124.9px;height:54.73px;background:#fdfcfd"></div>
<div class="a" style="left:390.5px;top:392.4px;width:2124.9px;height:1px;background:#efeef2"></div>
<div class="a" style="left:390.5px;top:453.0px;width:2124.9px;height:1.2px;background:#dfdee3"></div>
<div class="a" style="left:390.5px;top:507.63px;width:2124.9px;height:1px;background:#f0eff3"></div>
<div class="a" style="left:390.5px;top:562.36px;width:2124.9px;height:1px;background:#f0eff3"></div>
<div class="a" style="left:390.5px;top:617.0899999999999px;width:2124.9px;height:1px;background:#f0eff3"></div>
<div class="a" style="left:390.5px;top:671.8199999999999px;width:2124.9px;height:1px;background:#f0eff3"></div>
<div class="a" style="left:390.5px;top:726.55px;width:2124.9px;height:1px;background:#f0eff3"></div>
<div class="a" style="left:390.5px;top:781.28px;width:2124.9px;height:1px;background:#f0eff3"></div>
<div class="a" style="left:390.5px;top:836.01px;width:2124.9px;height:1px;background:#f0eff3"></div>
<div class="a" style="left:390.5px;top:890.74px;width:2124.9px;height:1px;background:#f0eff3"></div>
<div class="a" style="left:390.5px;top:945.47px;width:2124.9px;height:1px;background:#f0eff3"></div>
<div class="a" style="left:390.5px;top:1000.1999999999999px;width:2124.9px;height:1px;background:#f0eff3"></div>
<div class="a" style="left:390.0px;top:392.4px;width:1px;height:608.3px;background:#f0eff3"></div>
<div class="a" style="left:444.0px;top:392.4px;width:1px;height:608.3px;background:#f0eff3"></div>
<div class="a" style="left:514.0px;top:392.4px;width:1px;height:608.3px;background:#f0eff3"></div>
<div class="a" style="left:598.9px;top:392.4px;width:1px;height:608.3px;background:#f0eff3"></div>
<div class="a" style="left:738.0px;top:392.4px;width:1px;height:608.3px;background:#f0eff3"></div>
<div class="a" style="left:842.9px;top:392.4px;width:1px;height:608.3px;background:#f0eff3"></div>
<div class="a" style="left:909.0px;top:392.4px;width:1px;height:608.3px;background:#f0eff3"></div>
<div class="a" style="left:1013.5px;top:392.4px;width:1px;height:608.3px;background:#f0eff3"></div>
<div class="a" style="left:1086.7px;top:392.4px;width:1px;height:608.3px;background:#f0eff3"></div>
<div class="a" style="left:1216.6px;top:392.4px;width:1px;height:608.3px;background:#f0eff3"></div>
<div class="a" style="left:1342.2px;top:392.4px;width:1px;height:608.3px;background:#f0eff3"></div>
<div class="a" style="left:1451.2px;top:392.4px;width:1px;height:608.3px;background:#f0eff3"></div>
<div class="a" style="left:1548.2px;top:392.4px;width:1px;height:608.3px;background:#f0eff3"></div>
<div class="a" style="left:1758.1px;top:392.4px;width:1px;height:608.3px;background:#f0eff3"></div>
<div class="a" style="left:1969.0px;top:392.4px;width:1px;height:608.3px;background:#f0eff3"></div>
<div class="a" style="left:2043.9px;top:392.4px;width:1px;height:608.3px;background:#f0eff3"></div>
<div class="a" style="left:2173.9px;top:392.4px;width:1px;height:608.3px;background:#f0eff3"></div>
<div class="a" style="left:2274.7px;top:392.4px;width:1px;height:608.3px;background:#f0eff3"></div>
<div class="a" style="left:2420.7px;top:392.4px;width:1px;height:608.3px;background:#f0eff3"></div>
<div class="a" style="left:2514.9px;top:392.4px;width:1px;height:608.3px;background:#f0eff3"></div>
<div class="a" style="left:408.3px;top:411.2px;width:17.6px;height:17.6px;border:1.5px solid #707070;border-radius:3.5px;background:#fff"></div>
<div class="t" style="left:444.5px;top:411.9px;width:70.0px;text-align:center;color:#333;font-size:19.5px;line-height:22px;font-weight:bold;">ID</div>
<div class="t" style="left:514.5px;top:411.9px;width:84.89999999999998px;text-align:center;color:#333;font-size:19.5px;line-height:22px;font-weight:bold;">用户ID</div>
<div class="t" style="left:599.4px;top:411.9px;width:139.10000000000002px;text-align:center;color:#333;font-size:19.5px;line-height:22px;font-weight:bold;">账号</div>
<div class="t" style="left:738.5px;top:411.9px;width:104.89999999999998px;text-align:center;color:#333;font-size:19.5px;line-height:22px;font-weight:bold;">真实姓名</div>
<div class="t" style="left:843.4px;top:411.9px;width:66.10000000000002px;text-align:center;color:#333;font-size:19.5px;line-height:22px;font-weight:bold;">备注</div>
<div class="t" style="left:909.5px;top:411.9px;width:104.5px;text-align:center;color:#333;font-size:19.5px;line-height:22px;font-weight:bold;">产品名称</div>
<div class="t" style="left:1014px;top:411.9px;width:73.20000000000005px;text-align:center;color:#333;font-size:19.5px;line-height:22px;font-weight:bold;">方向</div>
<div class="t" style="left:1087.2px;top:411.9px;width:129.89999999999986px;text-align:center;color:#333;font-size:19.5px;line-height:22px;font-weight:bold;">购买金额</div>
<div class="t" style="left:1217.1px;top:411.9px;width:125.60000000000014px;text-align:center;color:#333;font-size:19.5px;line-height:22px;font-weight:bold;">买入后余额</div>
<div class="t" style="left:1342.7px;top:411.9px;width:109.0px;text-align:center;color:#333;font-size:19.5px;line-height:22px;font-weight:bold;">建仓价</div>
<div class="t" style="left:1451.7px;top:411.9px;width:97.0px;text-align:center;color:#333;font-size:19.5px;line-height:22px;font-weight:bold;">平仓价</div>
<div class="t" style="left:1548.7px;top:411.9px;width:209.89999999999986px;text-align:center;color:#333;font-size:19.5px;line-height:22px;font-weight:bold;">建仓时间</div>
<div class="t" style="left:1758.6px;top:411.9px;width:210.9000000000001px;text-align:center;color:#333;font-size:19.5px;line-height:22px;font-weight:bold;">平仓时间</div>
<div class="t" style="left:1969.5px;top:411.9px;width:74.90000000000009px;text-align:center;color:#333;font-size:19.5px;line-height:22px;font-weight:bold;">类型</div>
<div class="t" style="left:2044.4px;top:411.9px;width:130.0px;text-align:center;color:#333;font-size:19.5px;line-height:22px;font-weight:bold;">结果</div>
<div class="t" style="left:2174.4px;top:411.9px;width:100.79999999999973px;text-align:center;color:#333;font-size:19.5px;line-height:22px;font-weight:bold;">单控</div>
<div class="t" style="left:2275.2px;top:411.9px;width:146.0px;text-align:center;color:#333;font-size:19.5px;line-height:22px;font-weight:bold;">下单提醒</div>
<div class="t" style="left:2421.2px;top:411.9px;width:94.20000000000027px;text-align:center;color:#333;font-size:19.5px;line-height:22px;font-weight:bold;">操作</div>
<div class="a" style="left:408.3px;top:468.465px;width:17.6px;height:17.6px;border:1.5px solid #707070;border-radius:3.5px;background:#fff"></div>
<div class="t" style="left:444.5px;top:468.565px;width:70.0px;text-align:center;color:#333;font-size:19.5px;line-height:22px;">7700</div>
<div class="t" style="left:514.5px;top:468.565px;width:84.89999999999998px;text-align:center;color:#333;font-size:19.5px;line-height:22px;">692</div>
<div class="t" style="left:599.4px;top:468.565px;width:139.10000000000002px;text-align:center;color:#333;font-size:19.5px;line-height:22px;">ysf138</div>
<div class="t" style="left:738.5px;top:469.765px;width:104.89999999999998px;text-align:center;color:#333;font-size:19.5px;line-height:22px;">余水飞</div>
<div class="t" style="left:909.5px;top:469.765px;width:104.5px;text-align:center;color:#333;font-size:19.5px;line-height:22px;">高梁</div>
<div class="t" style="left:1026.8px;top:471.265px;width:47px;height:22px;background:#e74c3c;border-radius:3px;color:#fff;font-weight:bold;font-size:15px;line-height:22px;text-align:center">买涨</div>
<div class="t" style="left:1087.2px;top:468.565px;width:129.89999999999986px;text-align:center;color:#333;font-size:19.5px;line-height:22px;">500.00</div>
<div class="t" style="left:1217.1px;top:468.565px;width:125.60000000000014px;text-align:center;color:#333;font-size:19.5px;line-height:22px;">999399.00</div>
<div class="t" style="left:1342.7px;top:468.565px;width:109.0px;text-align:center;color:#333;font-size:19.5px;line-height:22px;">405.2486</div>
<div class="t" style="left:1451.7px;top:468.565px;width:97.0px;text-align:center;color:#333;font-size:19.5px;line-height:22px;">-</div>
<div class="t" style="left:1548.7px;top:468.565px;width:209.89999999999986px;text-align:center;color:#333;font-size:19.5px;line-height:22px;">2024-10-19 22:35:03</div>
<div class="t" style="left:1758.6px;top:468.565px;width:210.9000000000001px;text-align:center;color:#333;font-size:19.5px;line-height:22px;">2024-10-19 22:43:03</div>
<div class="t" style="left:1969.5px;top:468.565px;width:74.90000000000009px;text-align:center;color:#333;font-size:19.5px;line-height:22px;">480/5</div>
<div class="t" style="left:2044.4px;top:468.565px;width:130.0px;text-align:center;color:#333;font-size:19.5px;line-height:22px;">0</div>
<div class="a" style="left:2188px;top:467.265px;width:74px;height:26px;border:1px solid #666;border-radius:3px;background:#fff"></div>
<div class="t" style="left:2195.5px;top:469.765px;color:#222;font-size:19.5px;line-height:22px">默认</div>
<div class="a" style="left:2241px;top:475.765px"><svg width="14" height="9" viewBox="0 0 14 9" style="display:block"><path d="M1.2 1.4l5.8 5.8 5.8-5.8" fill="none" stroke="#222" stroke-width="2"/></svg></div>
<div class="a" style="left:2290px;top:465.765px;width:118px;height:30px;background:#18bc9c;border-radius:3px"></div>
<div class="a" style="left:2298px;top:473.265px"><svg width="15" height="15" viewBox="0 0 15 15" style="display:block;overflow:visible" ><path fill="#fff" fill-rule="evenodd" d="M7.5 0 A7.5 7.5 0 1 1 7.5 15 A7.5 7.5 0 1 1 7.5 0 Z M4.9 4.9 H10.1 V10.1 H4.9 Z"/></svg></div>
<div class="t" style="left:2317.5px;top:470.765px;color:#fff;font-size:16.5px;line-height:20px">关闭提示音</div>
<div class="a" style="left:2435px;top:465.765px;width:32px;height:30px;background:#18bc9c;border-radius:3px"></div>
<div class="a" style="left:2442.5px;top:472.765px"><svg width="16" height="16" viewBox="0 0 18 18" style="display:block;overflow:visible" ><path fill="#fff" d="M13.2 0.8 L17.2 4.8 L6 16 L0.6 17.4 L2 12 Z"/><path fill="none" stroke="#18bc9c" stroke-width="0.9" d="M2.6 12.6 L5.4 15.4 M11.4 2.6 L15.4 6.6"/></svg></div>
<div class="a" style="left:2472px;top:465.765px;width:30px;height:30px;background:#e74c3c;border-radius:3px"></div>
<div class="a" style="left:2480.5px;top:472.765px"><svg width="13" height="15" viewBox="0 0 16.5 18" style="display:block;overflow:visible" ><g fill="#fff"><rect x="0" y="2.6" width="16.5" height="1.9" rx="0.4"/><path d="M5.2 2.8 V1.4 Q5.2 0.2 6.4 0.2 H10.1 Q11.3 0.2 11.3 1.4 V2.8 H9.9 V1.5 H6.6 V2.8 Z"/><path d="M1.3 5.2 H15.2 L14.3 16.4 Q14.2 18 12.6 18 H3.9 Q2.3 18 2.2 16.4 Z"/></g><g fill="#e74c3c"><rect x="4.9" y="7.2" width="1.2" height="8.4"/><rect x="7.65" y="7.2" width="1.2" height="8.4"/><rect x="10.4" y="7.2" width="1.2" height="8.4"/></g></svg></div>
<div class="a" style="left:408.3px;top:523.195px;width:17.6px;height:17.6px;border:1.5px solid #707070;border-radius:3.5px;background:#fff"></div>
<div class="t" style="left:444.5px;top:523.295px;width:70.0px;text-align:center;color:#333;font-size:19.5px;line-height:22px;">7699</div>
<div class="t" style="left:514.5px;top:523.295px;width:84.89999999999998px;text-align:center;color:#333;font-size:19.5px;line-height:22px;">692</div>
<div class="t" style="left:599.4px;top:523.295px;width:139.10000000000002px;text-align:center;color:#333;font-size:19.5px;line-height:22px;">ysf138</div>
<div class="t" style="left:738.5px;top:524.495px;width:104.89999999999998px;text-align:center;color:#333;font-size:19.5px;line-height:22px;">余水飞</div>
<div class="t" style="left:909.5px;top:524.495px;width:104.5px;text-align:center;color:#333;font-size:19.5px;line-height:22px;">稀土</div>
<div class="t" style="left:1026.8px;top:525.995px;width:47px;height:22px;background:#e74c3c;border-radius:3px;color:#fff;font-weight:bold;font-size:15px;line-height:22px;text-align:center">买涨</div>
<div class="t" style="left:1087.2px;top:523.295px;width:129.89999999999986px;text-align:center;color:#333;font-size:19.5px;line-height:22px;">100.00</div>
<div class="t" style="left:1217.1px;top:523.295px;width:125.60000000000014px;text-align:center;color:#333;font-size:19.5px;line-height:22px;">999899.00</div>
<div class="t" style="left:1342.7px;top:523.295px;width:109.0px;text-align:center;color:#333;font-size:19.5px;line-height:22px;">68.8383</div>
<div class="t" style="left:1451.7px;top:523.295px;width:97.0px;text-align:center;color:#333;font-size:19.5px;line-height:22px;">-</div>
<div class="t" style="left:1548.7px;top:523.295px;width:209.89999999999986px;text-align:center;color:#333;font-size:19.5px;line-height:22px;">2024-10-19 22:34:17</div>
<div class="t" style="left:1758.6px;top:523.295px;width:210.9000000000001px;text-align:center;color:#333;font-size:19.5px;line-height:22px;">2024-10-19 22:42:17</div>
<div class="t" style="left:1969.5px;top:523.295px;width:74.90000000000009px;text-align:center;color:#333;font-size:19.5px;line-height:22px;">480/5</div>
<div class="t" style="left:2044.4px;top:523.295px;width:130.0px;text-align:center;color:#333;font-size:19.5px;line-height:22px;">0</div>
<div class="a" style="left:2188px;top:521.995px;width:74px;height:26px;border:1px solid #666;border-radius:3px;background:#fff"></div>
<div class="t" style="left:2195.5px;top:524.495px;color:#222;font-size:19.5px;line-height:22px">默认</div>
<div class="a" style="left:2241px;top:530.495px"><svg width="14" height="9" viewBox="0 0 14 9" style="display:block"><path d="M1.2 1.4l5.8 5.8 5.8-5.8" fill="none" stroke="#222" stroke-width="2"/></svg></div>
<div class="a" style="left:2290px;top:520.495px;width:118px;height:30px;background:#18bc9c;border-radius:3px"></div>
<div class="a" style="left:2298px;top:527.995px"><svg width="15" height="15" viewBox="0 0 15 15" style="display:block;overflow:visible" ><path fill="#fff" fill-rule="evenodd" d="M7.5 0 A7.5 7.5 0 1 1 7.5 15 A7.5 7.5 0 1 1 7.5 0 Z M4.9 4.9 H10.1 V10.1 H4.9 Z"/></svg></div>
<div class="t" style="left:2317.5px;top:525.495px;color:#fff;font-size:16.5px;line-height:20px">关闭提示音</div>
<div class="a" style="left:2435px;top:520.495px;width:32px;height:30px;background:#18bc9c;border-radius:3px"></div>
<div class="a" style="left:2442.5px;top:527.495px"><svg width="16" height="16" viewBox="0 0 18 18" style="display:block;overflow:visible" ><path fill="#fff" d="M13.2 0.8 L17.2 4.8 L6 16 L0.6 17.4 L2 12 Z"/><path fill="none" stroke="#18bc9c" stroke-width="0.9" d="M2.6 12.6 L5.4 15.4 M11.4 2.6 L15.4 6.6"/></svg></div>
<div class="a" style="left:2472px;top:520.495px;width:30px;height:30px;background:#e74c3c;border-radius:3px"></div>
<div class="a" style="left:2480.5px;top:527.495px"><svg width="13" height="15" viewBox="0 0 16.5 18" style="display:block;overflow:visible" ><g fill="#fff"><rect x="0" y="2.6" width="16.5" height="1.9" rx="0.4"/><path d="M5.2 2.8 V1.4 Q5.2 0.2 6.4 0.2 H10.1 Q11.3 0.2 11.3 1.4 V2.8 H9.9 V1.5 H6.6 V2.8 Z"/><path d="M1.3 5.2 H15.2 L14.3 16.4 Q14.2 18 12.6 18 H3.9 Q2.3 18 2.2 16.4 Z"/></g><g fill="#e74c3c"><rect x="4.9" y="7.2" width="1.2" height="8.4"/><rect x="7.65" y="7.2" width="1.2" height="8.4"/><rect x="10.4" y="7.2" width="1.2" height="8.4"/></g></svg></div>
<div class="a" style="left:408.3px;top:577.9250000000001px;width:17.6px;height:17.6px;border:1.5px solid #707070;border-radius:3.5px;background:#fff"></div>
<div class="t" style="left:444.5px;top:578.025px;width:70.0px;text-align:center;color:#333;font-size:19.5px;line-height:22px;">7698</div>
<div class="t" style="left:514.5px;top:578.025px;width:84.89999999999998px;text-align:center;color:#333;font-size:19.5px;line-height:22px;">677</div>
<div class="t" style="left:599.4px;top:578.025px;width:139.10000000000002px;text-align:center;color:#333;font-size:19.5px;line-height:22px;">zhf520qq</div>
<div class="t" style="left:738.5px;top:579.225px;width:104.89999999999998px;text-align:center;color:#333;font-size:19.5px;line-height:22px;">张海峰</div>
<div class="t" style="left:909.5px;top:579.225px;width:104.5px;text-align:center;color:#333;font-size:19.5px;line-height:22px;">稀土</div>
<div class="t" style="left:1026.8px;top:580.725px;width:47px;height:22px;background:#e74c3c;border-radius:3px;color:#fff;font-weight:bold;font-size:15px;line-height:22px;text-align:center">买涨</div>
<div class="t" style="left:1087.2px;top:578.025px;width:129.89999999999986px;text-align:center;color:#333;font-size:19.5px;line-height:22px;">603700.66</div>
<div class="t" style="left:1217.1px;top:578.025px;width:125.60000000000014px;text-align:center;color:#333;font-size:19.5px;line-height:22px;">0.00</div>
<div class="t" style="left:1342.7px;top:578.025px;width:109.0px;text-align:center;color:#333;font-size:19.5px;line-height:22px;">71.6685</div>
<div class="t" style="left:1451.7px;top:578.025px;width:97.0px;text-align:center;color:#333;font-size:19.5px;line-height:22px;">71.2</div>
<div class="t" style="left:1548.7px;top:578.025px;width:209.89999999999986px;text-align:center;color:#333;font-size:19.5px;line-height:22px;">2024-09-03 21:05:10</div>
<div class="t" style="left:1758.6px;top:578.025px;width:210.9000000000001px;text-align:center;color:#333;font-size:19.5px;line-height:22px;">2024-09-03 21:13:10</div>
<div class="t" style="left:1969.5px;top:578.025px;width:74.90000000000009px;text-align:center;color:#333;font-size:19.5px;line-height:22px;">480/5</div>
<div class="t" style="left:2044.4px;top:578.025px;width:130.0px;text-align:center;color:#333;font-size:19.5px;line-height:22px;">-30185.03</div>
<div class="t" style="left:2195px;top:580.725px;width:61px;height:23px;background:#e74c3c;border-radius:3px;color:#fff;font-weight:bold;font-size:15.5px;line-height:23px;text-align:center">已平仓</div>
<div class="a" style="left:2290px;top:575.225px;width:118px;height:30px;background:#18bc9c;border-radius:3px"></div>
<div class="a" style="left:2298px;top:582.725px"><svg width="15" height="15" viewBox="0 0 15 15" style="display:block;overflow:visible" ><path fill="#fff" fill-rule="evenodd" d="M7.5 0 A7.5 7.5 0 1 1 7.5 15 A7.5 7.5 0 1 1 7.5 0 Z M4.9 4.9 H10.1 V10.1 H4.9 Z"/></svg></div>
<div class="t" style="left:2317.5px;top:580.225px;color:#fff;font-size:16.5px;line-height:20px">关闭提示音</div>
<div class="a" style="left:2435px;top:575.225px;width:32px;height:30px;background:#18bc9c;border-radius:3px"></div>
<div class="a" style="left:2442.5px;top:582.225px"><svg width="16" height="16" viewBox="0 0 18 18" style="display:block;overflow:visible" ><path fill="#fff" d="M13.2 0.8 L17.2 4.8 L6 16 L0.6 17.4 L2 12 Z"/><path fill="none" stroke="#18bc9c" stroke-width="0.9" d="M2.6 12.6 L5.4 15.4 M11.4 2.6 L15.4 6.6"/></svg></div>
<div class="a" style="left:2472px;top:575.225px;width:30px;height:30px;background:#e74c3c;border-radius:3px"></div>
<div class="a" style="left:2480.5px;top:582.225px"><svg width="13" height="15" viewBox="0 0 16.5 18" style="display:block;overflow:visible" ><g fill="#fff"><rect x="0" y="2.6" width="16.5" height="1.9" rx="0.4"/><path d="M5.2 2.8 V1.4 Q5.2 0.2 6.4 0.2 H10.1 Q11.3 0.2 11.3 1.4 V2.8 H9.9 V1.5 H6.6 V2.8 Z"/><path d="M1.3 5.2 H15.2 L14.3 16.4 Q14.2 18 12.6 18 H3.9 Q2.3 18 2.2 16.4 Z"/></g><g fill="#e74c3c"><rect x="4.9" y="7.2" width="1.2" height="8.4"/><rect x="7.65" y="7.2" width="1.2" height="8.4"/><rect x="10.4" y="7.2" width="1.2" height="8.4"/></g></svg></div>
<div class="a" style="left:408.3px;top:632.655px;width:17.6px;height:17.6px;border:1.5px solid #707070;border-radius:3.5px;background:#fff"></div>
<div class="t" style="left:444.5px;top:632.7549999999999px;width:70.0px;text-align:center;color:#333;font-size:19.5px;line-height:22px;">7697</div>
<div class="t" style="left:514.5px;top:632.7549999999999px;width:84.89999999999998px;text-align:center;color:#333;font-size:19.5px;line-height:22px;">658</div>
<div class="t" style="left:599.4px;top:632.7549999999999px;width:139.10000000000002px;text-align:center;color:#333;font-size:19.5px;line-height:22px;">long539</div>
<div class="t" style="left:738.5px;top:633.9549999999999px;width:104.89999999999998px;text-align:center;color:#333;font-size:19.5px;line-height:22px;">唐龙涛</div>
<div class="t" style="left:909.5px;top:633.9549999999999px;width:104.5px;text-align:center;color:#333;font-size:19.5px;line-height:22px;">稀土</div>
<div class="t" style="left:1026.8px;top:635.4549999999999px;width:47px;height:22px;background:#e74c3c;border-radius:3px;color:#fff;font-weight:bold;font-size:15px;line-height:22px;text-align:center">买涨</div>
<div class="t" style="left:1087.2px;top:632.7549999999999px;width:129.89999999999986px;text-align:center;color:#333;font-size:19.5px;line-height:22px;">437892.97</div>
<div class="t" style="left:1217.1px;top:632.7549999999999px;width:125.60000000000014px;text-align:center;color:#333;font-size:19.5px;line-height:22px;">0.00</div>
<div class="t" style="left:1342.7px;top:632.7549999999999px;width:109.0px;text-align:center;color:#333;font-size:19.5px;line-height:22px;">71.6712</div>
<div class="t" style="left:1451.7px;top:632.7549999999999px;width:97.0px;text-align:center;color:#333;font-size:19.5px;line-height:22px;">71.6742</div>
<div class="t" style="left:1548.7px;top:632.7549999999999px;width:209.89999999999986px;text-align:center;color:#333;font-size:19.5px;line-height:22px;">2024-09-03 21:04:21</div>
<div class="t" style="left:1758.6px;top:632.7549999999999px;width:210.9000000000001px;text-align:center;color:#333;font-size:19.5px;line-height:22px;">2024-09-03 21:12:21</div>
<div class="t" style="left:1969.5px;top:632.7549999999999px;width:74.90000000000009px;text-align:center;color:#333;font-size:19.5px;line-height:22px;">480/5</div>
<div class="t" style="left:2044.4px;top:632.7549999999999px;width:130.0px;text-align:center;color:#333;font-size:19.5px;line-height:22px;">459787.62</div>
<div class="t" style="left:2195px;top:635.4549999999999px;width:61px;height:23px;background:#e74c3c;border-radius:3px;color:#fff;font-weight:bold;font-size:15.5px;line-height:23px;text-align:center">已平仓</div>
<div class="a" style="left:2290px;top:629.9549999999999px;width:118px;height:30px;background:#18bc9c;border-radius:3px"></div>
<div class="a" style="left:2298px;top:637.4549999999999px"><svg width="15" height="15" viewBox="0 0 15 15" style="display:block;overflow:visible" ><path fill="#fff" fill-rule="evenodd" d="M7.5 0 A7.5 7.5 0 1 1 7.5 15 A7.5 7.5 0 1 1 7.5 0 Z M4.9 4.9 H10.1 V10.1 H4.9 Z"/></svg></div>
<div class="t" style="left:2317.5px;top:634.9549999999999px;color:#fff;font-size:16.5px;line-height:20px">关闭提示音</div>
<div class="a" style="left:2435px;top:629.9549999999999px;width:32px;height:30px;background:#18bc9c;border-radius:3px"></div>
<div class="a" style="left:2442.5px;top:636.9549999999999px"><svg width="16" height="16" viewBox="0 0 18 18" style="display:block;overflow:visible" ><path fill="#fff" d="M13.2 0.8 L17.2 4.8 L6 16 L0.6 17.4 L2 12 Z"/><path fill="none" stroke="#18bc9c" stroke-width="0.9" d="M2.6 12.6 L5.4 15.4 M11.4 2.6 L15.4 6.6"/></svg></div>
<div class="a" style="left:2472px;top:629.9549999999999px;width:30px;height:30px;background:#e74c3c;border-radius:3px"></div>
<div class="a" style="left:2480.5px;top:636.9549999999999px"><svg width="13" height="15" viewBox="0 0 16.5 18" style="display:block;overflow:visible" ><g fill="#fff"><rect x="0" y="2.6" width="16.5" height="1.9" rx="0.4"/><path d="M5.2 2.8 V1.4 Q5.2 0.2 6.4 0.2 H10.1 Q11.3 0.2 11.3 1.4 V2.8 H9.9 V1.5 H6.6 V2.8 Z"/><path d="M1.3 5.2 H15.2 L14.3 16.4 Q14.2 18 12.6 18 H3.9 Q2.3 18 2.2 16.4 Z"/></g><g fill="#e74c3c"><rect x="4.9" y="7.2" width="1.2" height="8.4"/><rect x="7.65" y="7.2" width="1.2" height="8.4"/><rect x="10.4" y="7.2" width="1.2" height="8.4"/></g></svg></div>
<div class="a" style="left:408.3px;top:687.385px;width:17.6px;height:17.6px;border:1.5px solid #707070;border-radius:3.5px;background:#fff"></div>
<div class="t" style="left:444.5px;top:687.4849999999999px;width:70.0px;text-align:center;color:#333;font-size:19.5px;line-height:22px;">7696</div>
<div class="t" style="left:514.5px;top:687.4849999999999px;width:84.89999999999998px;text-align:center;color:#333;font-size:19.5px;line-height:22px;">666</div>
<div class="t" style="left:599.4px;top:687.4849999999999px;width:139.10000000000002px;text-align:center;color:#333;font-size:19.5px;line-height:22px;">LX888</div>
<div class="t" style="left:738.5px;top:688.685px;width:104.89999999999998px;text-align:center;color:#333;font-size:19.5px;line-height:22px;">练小玲</div>
<div class="t" style="left:909.5px;top:688.685px;width:104.5px;text-align:center;color:#333;font-size:19.5px;line-height:22px;">稀土</div>
<div class="t" style="left:1026.8px;top:690.185px;width:47px;height:22px;background:#e74c3c;border-radius:3px;color:#fff;font-weight:bold;font-size:15px;line-height:22px;text-align:center">买涨</div>
<div class="t" style="left:1087.2px;top:687.4849999999999px;width:129.89999999999986px;text-align:center;color:#333;font-size:19.5px;line-height:22px;">4623.95</div>
<div class="t" style="left:1217.1px;top:687.4849999999999px;width:125.60000000000014px;text-align:center;color:#333;font-size:19.5px;line-height:22px;">0.00</div>
<div class="t" style="left:1342.7px;top:687.4849999999999px;width:109.0px;text-align:center;color:#333;font-size:19.5px;line-height:22px;">71.6706</div>
<div class="t" style="left:1451.7px;top:687.4849999999999px;width:97.0px;text-align:center;color:#333;font-size:19.5px;line-height:22px;">71.6746</div>
<div class="t" style="left:1548.7px;top:687.4849999999999px;width:209.89999999999986px;text-align:center;color:#333;font-size:19.5px;line-height:22px;">2024-09-03 21:04:17</div>
<div class="t" style="left:1758.6px;top:687.4849999999999px;width:210.9000000000001px;text-align:center;color:#333;font-size:19.5px;line-height:22px;">2024-09-03 21:12:17</div>
<div class="t" style="left:1969.5px;top:687.4849999999999px;width:74.90000000000009px;text-align:center;color:#333;font-size:19.5px;line-height:22px;">480/5</div>
<div class="t" style="left:2044.4px;top:687.4849999999999px;width:130.0px;text-align:center;color:#333;font-size:19.5px;line-height:22px;">4855.15</div>
<div class="t" style="left:2195px;top:690.185px;width:61px;height:23px;background:#e74c3c;border-radius:3px;color:#fff;font-weight:bold;font-size:15.5px;line-height:23px;text-align:center">已平仓</div>
<div class="a" style="left:2290px;top:684.685px;width:118px;height:30px;background:#18bc9c;border-radius:3px"></div>
<div class="a" style="left:2298px;top:692.185px"><svg width="15" height="15" viewBox="0 0 15 15" style="display:block;overflow:visible" ><path fill="#fff" fill-rule="evenodd" d="M7.5 0 A7.5 7.5 0 1 1 7.5 15 A7.5 7.5 0 1 1 7.5 0 Z M4.9 4.9 H10.1 V10.1 H4.9 Z"/></svg></div>
<div class="t" style="left:2317.5px;top:689.685px;color:#fff;font-size:16.5px;line-height:20px">关闭提示音</div>
<div class="a" style="left:2435px;top:684.685px;width:32px;height:30px;background:#18bc9c;border-radius:3px"></div>
<div class="a" style="left:2442.5px;top:691.685px"><svg width="16" height="16" viewBox="0 0 18 18" style="display:block;overflow:visible" ><path fill="#fff" d="M13.2 0.8 L17.2 4.8 L6 16 L0.6 17.4 L2 12 Z"/><path fill="none" stroke="#18bc9c" stroke-width="0.9" d="M2.6 12.6 L5.4 15.4 M11.4 2.6 L15.4 6.6"/></svg></div>
<div class="a" style="left:2472px;top:684.685px;width:30px;height:30px;background:#e74c3c;border-radius:3px"></div>
<div class="a" style="left:2480.5px;top:691.685px"><svg width="13" height="15" viewBox="0 0 16.5 18" style="display:block;overflow:visible" ><g fill="#fff"><rect x="0" y="2.6" width="16.5" height="1.9" rx="0.4"/><path d="M5.2 2.8 V1.4 Q5.2 0.2 6.4 0.2 H10.1 Q11.3 0.2 11.3 1.4 V2.8 H9.9 V1.5 H6.6 V2.8 Z"/><path d="M1.3 5.2 H15.2 L14.3 16.4 Q14.2 18 12.6 18 H3.9 Q2.3 18 2.2 16.4 Z"/></g><g fill="#e74c3c"><rect x="4.9" y="7.2" width="1.2" height="8.4"/><rect x="7.65" y="7.2" width="1.2" height="8.4"/><rect x="10.4" y="7.2" width="1.2" height="8.4"/></g></svg></div>
<div class="a" style="left:408.3px;top:742.115px;width:17.6px;height:17.6px;border:1.5px solid #707070;border-radius:3.5px;background:#fff"></div>
<div class="t" style="left:444.5px;top:742.2149999999999px;width:70.0px;text-align:center;color:#333;font-size:19.5px;line-height:22px;">7695</div>
<div class="t" style="left:514.5px;top:742.2149999999999px;width:84.89999999999998px;text-align:center;color:#333;font-size:19.5px;line-height:22px;">668</div>
<div class="t" style="left:599.4px;top:742.2149999999999px;width:139.10000000000002px;text-align:center;color:#333;font-size:19.5px;line-height:22px;">cai5216</div>
<div class="t" style="left:738.5px;top:743.415px;width:104.89999999999998px;text-align:center;color:#333;font-size:19.5px;line-height:22px;">蔡凑华</div>
<div class="t" style="left:909.5px;top:743.415px;width:104.5px;text-align:center;color:#333;font-size:19.5px;line-height:22px;">稀土</div>
<div class="t" style="left:1026.8px;top:744.915px;width:47px;height:22px;background:#e74c3c;border-radius:3px;color:#fff;font-weight:bold;font-size:15px;line-height:22px;text-align:center">买涨</div>
<div class="t" style="left:1087.2px;top:742.2149999999999px;width:129.89999999999986px;text-align:center;color:#333;font-size:19.5px;line-height:22px;">26163.77</div>
<div class="t" style="left:1217.1px;top:742.2149999999999px;width:125.60000000000014px;text-align:center;color:#333;font-size:19.5px;line-height:22px;">0.00</div>
<div class="t" style="left:1342.7px;top:742.2149999999999px;width:109.0px;text-align:center;color:#333;font-size:19.5px;line-height:22px;">71.6485</div>
<div class="t" style="left:1451.7px;top:742.2149999999999px;width:97.0px;text-align:center;color:#333;font-size:19.5px;line-height:22px;">71.6545</div>
<div class="t" style="left:1548.7px;top:742.2149999999999px;width:209.89999999999986px;text-align:center;color:#333;font-size:19.5px;line-height:22px;">2024-09-03 21:04:17</div>
<div class="t" style="left:1758.6px;top:742.2149999999999px;width:210.9000000000001px;text-align:center;color:#333;font-size:19.5px;line-height:22px;">2024-09-03 21:12:17</div>
<div class="t" style="left:1969.5px;top:742.2149999999999px;width:74.90000000000009px;text-align:center;color:#333;font-size:19.5px;line-height:22px;">480/5</div>
<div class="t" style="left:2044.4px;top:742.2149999999999px;width:130.0px;text-align:center;color:#333;font-size:19.5px;line-height:22px;">27471.96</div>
<div class="t" style="left:2195px;top:744.915px;width:61px;height:23px;background:#e74c3c;border-radius:3px;color:#fff;font-weight:bold;font-size:15.5px;line-height:23px;text-align:center">已平仓</div>
<div class="a" style="left:2290px;top:739.415px;width:118px;height:30px;background:#18bc9c;border-radius:3px"></div>
<div class="a" style="left:2298px;top:746.915px"><svg width="15" height="15" viewBox="0 0 15 15" style="display:block;overflow:visible" ><path fill="#fff" fill-rule="evenodd" d="M7.5 0 A7.5 7.5 0 1 1 7.5 15 A7.5 7.5 0 1 1 7.5 0 Z M4.9 4.9 H10.1 V10.1 H4.9 Z"/></svg></div>
<div class="t" style="left:2317.5px;top:744.415px;color:#fff;font-size:16.5px;line-height:20px">关闭提示音</div>
<div class="a" style="left:2435px;top:739.415px;width:32px;height:30px;background:#18bc9c;border-radius:3px"></div>
<div class="a" style="left:2442.5px;top:746.415px"><svg width="16" height="16" viewBox="0 0 18 18" style="display:block;overflow:visible" ><path fill="#fff" d="M13.2 0.8 L17.2 4.8 L6 16 L0.6 17.4 L2 12 Z"/><path fill="none" stroke="#18bc9c" stroke-width="0.9" d="M2.6 12.6 L5.4 15.4 M11.4 2.6 L15.4 6.6"/></svg></div>
<div class="a" style="left:2472px;top:739.415px;width:30px;height:30px;background:#e74c3c;border-radius:3px"></div>
<div class="a" style="left:2480.5px;top:746.415px"><svg width="13" height="15" viewBox="0 0 16.5 18" style="display:block;overflow:visible" ><g fill="#fff"><rect x="0" y="2.6" width="16.5" height="1.9" rx="0.4"/><path d="M5.2 2.8 V1.4 Q5.2 0.2 6.4 0.2 H10.1 Q11.3 0.2 11.3 1.4 V2.8 H9.9 V1.5 H6.6 V2.8 Z"/><path d="M1.3 5.2 H15.2 L14.3 16.4 Q14.2 18 12.6 18 H3.9 Q2.3 18 2.2 16.4 Z"/></g><g fill="#e74c3c"><rect x="4.9" y="7.2" width="1.2" height="8.4"/><rect x="7.65" y="7.2" width="1.2" height="8.4"/><rect x="10.4" y="7.2" width="1.2" height="8.4"/></g></svg></div>
<div class="a" style="left:408.3px;top:796.845px;width:17.6px;height:17.6px;border:1.5px solid #707070;border-radius:3.5px;background:#fff"></div>
<div class="t" style="left:444.5px;top:796.9449999999999px;width:70.0px;text-align:center;color:#333;font-size:19.5px;line-height:22px;">7694</div>
<div class="t" style="left:514.5px;top:796.9449999999999px;width:84.89999999999998px;text-align:center;color:#333;font-size:19.5px;line-height:22px;">556</div>
<div class="t" style="left:599.4px;top:796.9449999999999px;width:139.10000000000002px;text-align:center;color:#333;font-size:19.5px;line-height:22px;">jj007</div>
<div class="t" style="left:738.5px;top:798.145px;width:104.89999999999998px;text-align:center;color:#333;font-size:19.5px;line-height:22px;">周家俊</div>
<div class="t" style="left:909.5px;top:798.145px;width:104.5px;text-align:center;color:#333;font-size:19.5px;line-height:22px;">稀土</div>
<div class="t" style="left:1026.8px;top:799.645px;width:47px;height:22px;background:#e74c3c;border-radius:3px;color:#fff;font-weight:bold;font-size:15px;line-height:22px;text-align:center">买涨</div>
<div class="t" style="left:1087.2px;top:796.9449999999999px;width:129.89999999999986px;text-align:center;color:#333;font-size:19.5px;line-height:22px;">5396019.72</div>
<div class="t" style="left:1217.1px;top:796.9449999999999px;width:125.60000000000014px;text-align:center;color:#333;font-size:19.5px;line-height:22px;">0.00</div>
<div class="t" style="left:1342.7px;top:796.9449999999999px;width:109.0px;text-align:center;color:#333;font-size:19.5px;line-height:22px;">71.6485</div>
<div class="t" style="left:1451.7px;top:796.9449999999999px;width:97.0px;text-align:center;color:#333;font-size:19.5px;line-height:22px;">71.6575</div>
<div class="t" style="left:1548.7px;top:796.9449999999999px;width:209.89999999999986px;text-align:center;color:#333;font-size:19.5px;line-height:22px;">2024-09-03 21:04:16</div>
<div class="t" style="left:1758.6px;top:796.9449999999999px;width:210.9000000000001px;text-align:center;color:#333;font-size:19.5px;line-height:22px;">2024-09-03 21:12:16</div>
<div class="t" style="left:1969.5px;top:796.9449999999999px;width:74.90000000000009px;text-align:center;color:#333;font-size:19.5px;line-height:22px;">480/5</div>
<div class="t" style="left:2044.4px;top:796.9449999999999px;width:130.0px;text-align:center;color:#333;font-size:19.5px;line-height:22px;">5665820.5</div>
<div class="t" style="left:2195px;top:799.645px;width:61px;height:23px;background:#e74c3c;border-radius:3px;color:#fff;font-weight:bold;font-size:15.5px;line-height:23px;text-align:center">已平仓</div>
<div class="a" style="left:2290px;top:794.145px;width:118px;height:30px;background:#18bc9c;border-radius:3px"></div>
<div class="a" style="left:2298px;top:801.645px"><svg width="15" height="15" viewBox="0 0 15 15" style="display:block;overflow:visible" ><path fill="#fff" fill-rule="evenodd" d="M7.5 0 A7.5 7.5 0 1 1 7.5 15 A7.5 7.5 0 1 1 7.5 0 Z M4.9 4.9 H10.1 V10.1 H4.9 Z"/></svg></div>
<div class="t" style="left:2317.5px;top:799.145px;color:#fff;font-size:16.5px;line-height:20px">关闭提示音</div>
<div class="a" style="left:2435px;top:794.145px;width:32px;height:30px;background:#18bc9c;border-radius:3px"></div>
<div class="a" style="left:2442.5px;top:801.145px"><svg width="16" height="16" viewBox="0 0 18 18" style="display:block;overflow:visible" ><path fill="#fff" d="M13.2 0.8 L17.2 4.8 L6 16 L0.6 17.4 L2 12 Z"/><path fill="none" stroke="#18bc9c" stroke-width="0.9" d="M2.6 12.6 L5.4 15.4 M11.4 2.6 L15.4 6.6"/></svg></div>
<div class="a" style="left:2472px;top:794.145px;width:30px;height:30px;background:#e74c3c;border-radius:3px"></div>
<div class="a" style="left:2480.5px;top:801.145px"><svg width="13" height="15" viewBox="0 0 16.5 18" style="display:block;overflow:visible" ><g fill="#fff"><rect x="0" y="2.6" width="16.5" height="1.9" rx="0.4"/><path d="M5.2 2.8 V1.4 Q5.2 0.2 6.4 0.2 H10.1 Q11.3 0.2 11.3 1.4 V2.8 H9.9 V1.5 H6.6 V2.8 Z"/><path d="M1.3 5.2 H15.2 L14.3 16.4 Q14.2 18 12.6 18 H3.9 Q2.3 18 2.2 16.4 Z"/></g><g fill="#e74c3c"><rect x="4.9" y="7.2" width="1.2" height="8.4"/><rect x="7.65" y="7.2" width="1.2" height="8.4"/><rect x="10.4" y="7.2" width="1.2" height="8.4"/></g></svg></div>
<div class="a" style="left:408.3px;top:851.575px;width:17.6px;height:17.6px;border:1.5px solid #707070;border-radius:3.5px;background:#fff"></div>
<div class="t" style="left:444.5px;top:851.675px;width:70.0px;text-align:center;color:#333;font-size:19.5px;line-height:22px;">7693</div>
<div class="t" style="left:514.5px;top:851.675px;width:84.89999999999998px;text-align:center;color:#333;font-size:19.5px;line-height:22px;">600</div>
<div class="t" style="left:599.4px;top:851.675px;width:139.10000000000002px;text-align:center;color:#333;font-size:19.5px;line-height:22px;">zy999</div>
<div class="t" style="left:738.5px;top:852.875px;width:104.89999999999998px;text-align:center;color:#333;font-size:19.5px;line-height:22px;">周宇</div>
<div class="t" style="left:909.5px;top:852.875px;width:104.5px;text-align:center;color:#333;font-size:19.5px;line-height:22px;">稀土</div>
<div class="t" style="left:1026.8px;top:854.375px;width:47px;height:22px;background:#e74c3c;border-radius:3px;color:#fff;font-weight:bold;font-size:15px;line-height:22px;text-align:center">买涨</div>
<div class="t" style="left:1087.2px;top:851.675px;width:129.89999999999986px;text-align:center;color:#333;font-size:19.5px;line-height:22px;">1469029.89</div>
<div class="t" style="left:1217.1px;top:851.675px;width:125.60000000000014px;text-align:center;color:#333;font-size:19.5px;line-height:22px;">0.00</div>
<div class="t" style="left:1342.7px;top:851.675px;width:109.0px;text-align:center;color:#333;font-size:19.5px;line-height:22px;">71.6813</div>
<div class="t" style="left:1451.7px;top:851.675px;width:97.0px;text-align:center;color:#333;font-size:19.5px;line-height:22px;">71.6853</div>
<div class="t" style="left:1548.7px;top:851.675px;width:209.89999999999986px;text-align:center;color:#333;font-size:19.5px;line-height:22px;">2024-09-03 21:04:01</div>
<div class="t" style="left:1758.6px;top:851.675px;width:210.9000000000001px;text-align:center;color:#333;font-size:19.5px;line-height:22px;">2024-09-03 21:12:01</div>
<div class="t" style="left:1969.5px;top:851.675px;width:74.90000000000009px;text-align:center;color:#333;font-size:19.5px;line-height:22px;">480/5</div>
<div class="t" style="left:2044.4px;top:851.675px;width:130.0px;text-align:center;color:#333;font-size:19.5px;line-height:22px;">1542481.38</div>
<div class="t" style="left:2195px;top:854.375px;width:61px;height:23px;background:#e74c3c;border-radius:3px;color:#fff;font-weight:bold;font-size:15.5px;line-height:23px;text-align:center">已平仓</div>
<div class="a" style="left:2290px;top:848.875px;width:118px;height:30px;background:#18bc9c;border-radius:3px"></div>
<div class="a" style="left:2298px;top:856.375px"><svg width="15" height="15" viewBox="0 0 15 15" style="display:block;overflow:visible" ><path fill="#fff" fill-rule="evenodd" d="M7.5 0 A7.5 7.5 0 1 1 7.5 15 A7.5 7.5 0 1 1 7.5 0 Z M4.9 4.9 H10.1 V10.1 H4.9 Z"/></svg></div>
<div class="t" style="left:2317.5px;top:853.875px;color:#fff;font-size:16.5px;line-height:20px">关闭提示音</div>
<div class="a" style="left:2435px;top:848.875px;width:32px;height:30px;background:#18bc9c;border-radius:3px"></div>
<div class="a" style="left:2442.5px;top:855.875px"><svg width="16" height="16" viewBox="0 0 18 18" style="display:block;overflow:visible" ><path fill="#fff" d="M13.2 0.8 L17.2 4.8 L6 16 L0.6 17.4 L2 12 Z"/><path fill="none" stroke="#18bc9c" stroke-width="0.9" d="M2.6 12.6 L5.4 15.4 M11.4 2.6 L15.4 6.6"/></svg></div>
<div class="a" style="left:2472px;top:848.875px;width:30px;height:30px;background:#e74c3c;border-radius:3px"></div>
<div class="a" style="left:2480.5px;top:855.875px"><svg width="13" height="15" viewBox="0 0 16.5 18" style="display:block;overflow:visible" ><g fill="#fff"><rect x="0" y="2.6" width="16.5" height="1.9" rx="0.4"/><path d="M5.2 2.8 V1.4 Q5.2 0.2 6.4 0.2 H10.1 Q11.3 0.2 11.3 1.4 V2.8 H9.9 V1.5 H6.6 V2.8 Z"/><path d="M1.3 5.2 H15.2 L14.3 16.4 Q14.2 18 12.6 18 H3.9 Q2.3 18 2.2 16.4 Z"/></g><g fill="#e74c3c"><rect x="4.9" y="7.2" width="1.2" height="8.4"/><rect x="7.65" y="7.2" width="1.2" height="8.4"/><rect x="10.4" y="7.2" width="1.2" height="8.4"/></g></svg></div>
<div class="a" style="left:408.3px;top:906.3050000000001px;width:17.6px;height:17.6px;border:1.5px solid #707070;border-radius:3.5px;background:#fff"></div>
<div class="t" style="left:444.5px;top:906.405px;width:70.0px;text-align:center;color:#333;font-size:19.5px;line-height:22px;">7692</div>
<div class="t" style="left:514.5px;top:906.405px;width:84.89999999999998px;text-align:center;color:#333;font-size:19.5px;line-height:22px;">595</div>
<div class="t" style="left:599.4px;top:906.405px;width:139.10000000000002px;text-align:center;color:#333;font-size:19.5px;line-height:22px;">Fushanxiang</div>
<div class="t" style="left:738.5px;top:907.605px;width:104.89999999999998px;text-align:center;color:#333;font-size:19.5px;line-height:22px;">付善香</div>
<div class="t" style="left:909.5px;top:907.605px;width:104.5px;text-align:center;color:#333;font-size:19.5px;line-height:22px;">稀土</div>
<div class="t" style="left:1026.8px;top:909.105px;width:47px;height:22px;background:#e74c3c;border-radius:3px;color:#fff;font-weight:bold;font-size:15px;line-height:22px;text-align:center">买涨</div>
<div class="t" style="left:1087.2px;top:906.405px;width:129.89999999999986px;text-align:center;color:#333;font-size:19.5px;line-height:22px;">1218936.27</div>
<div class="t" style="left:1217.1px;top:906.405px;width:125.60000000000014px;text-align:center;color:#333;font-size:19.5px;line-height:22px;">0.00</div>
<div class="t" style="left:1342.7px;top:906.405px;width:109.0px;text-align:center;color:#333;font-size:19.5px;line-height:22px;">71.6899</div>
<div class="t" style="left:1451.7px;top:906.405px;width:97.0px;text-align:center;color:#333;font-size:19.5px;line-height:22px;">71.6969</div>
<div class="t" style="left:1548.7px;top:906.405px;width:209.89999999999986px;text-align:center;color:#333;font-size:19.5px;line-height:22px;">2024-09-03 21:03:50</div>
<div class="t" style="left:1758.6px;top:906.405px;width:210.9000000000001px;text-align:center;color:#333;font-size:19.5px;line-height:22px;">2024-09-03 21:11:50</div>
<div class="t" style="left:1969.5px;top:906.405px;width:74.90000000000009px;text-align:center;color:#333;font-size:19.5px;line-height:22px;">480/5</div>
<div class="t" style="left:2044.4px;top:906.405px;width:130.0px;text-align:center;color:#333;font-size:19.5px;line-height:22px;">1279883.12</div>
<div class="t" style="left:2195px;top:909.105px;width:61px;height:23px;background:#e74c3c;border-radius:3px;color:#fff;font-weight:bold;font-size:15.5px;line-height:23px;text-align:center">已平仓</div>
<div class="a" style="left:2290px;top:903.605px;width:118px;height:30px;background:#18bc9c;border-radius:3px"></div>
<div class="a" style="left:2298px;top:911.105px"><svg width="15" height="15" viewBox="0 0 15 15" style="display:block;overflow:visible" ><path fill="#fff" fill-rule="evenodd" d="M7.5 0 A7.5 7.5 0 1 1 7.5 15 A7.5 7.5 0 1 1 7.5 0 Z M4.9 4.9 H10.1 V10.1 H4.9 Z"/></svg></div>
<div class="t" style="left:2317.5px;top:908.605px;color:#fff;font-size:16.5px;line-height:20px">关闭提示音</div>
<div class="a" style="left:2435px;top:903.605px;width:32px;height:30px;background:#18bc9c;border-radius:3px"></div>
<div class="a" style="left:2442.5px;top:910.605px"><svg width="16" height="16" viewBox="0 0 18 18" style="display:block;overflow:visible" ><path fill="#fff" d="M13.2 0.8 L17.2 4.8 L6 16 L0.6 17.4 L2 12 Z"/><path fill="none" stroke="#18bc9c" stroke-width="0.9" d="M2.6 12.6 L5.4 15.4 M11.4 2.6 L15.4 6.6"/></svg></div>
<div class="a" style="left:2472px;top:903.605px;width:30px;height:30px;background:#e74c3c;border-radius:3px"></div>
<div class="a" style="left:2480.5px;top:910.605px"><svg width="13" height="15" viewBox="0 0 16.5 18" style="display:block;overflow:visible" ><g fill="#fff"><rect x="0" y="2.6" width="16.5" height="1.9" rx="0.4"/><path d="M5.2 2.8 V1.4 Q5.2 0.2 6.4 0.2 H10.1 Q11.3 0.2 11.3 1.4 V2.8 H9.9 V1.5 H6.6 V2.8 Z"/><path d="M1.3 5.2 H15.2 L14.3 16.4 Q14.2 18 12.6 18 H3.9 Q2.3 18 2.2 16.4 Z"/></g><g fill="#e74c3c"><rect x="4.9" y="7.2" width="1.2" height="8.4"/><rect x="7.65" y="7.2" width="1.2" height="8.4"/><rect x="10.4" y="7.2" width="1.2" height="8.4"/></g></svg></div>
<div class="a" style="left:408.3px;top:961.0350000000001px;width:17.6px;height:17.6px;border:1.5px solid #707070;border-radius:3.5px;background:#fff"></div>
<div class="t" style="left:444.5px;top:961.135px;width:70.0px;text-align:center;color:#333;font-size:19.5px;line-height:22px;">7691</div>
<div class="t" style="left:514.5px;top:961.135px;width:84.89999999999998px;text-align:center;color:#333;font-size:19.5px;line-height:22px;">676</div>
<div class="t" style="left:599.4px;top:961.135px;width:139.10000000000002px;text-align:center;color:#333;font-size:19.5px;line-height:22px;">dong520he</div>
<div class="t" style="left:738.5px;top:962.335px;width:104.89999999999998px;text-align:center;color:#333;font-size:19.5px;line-height:22px;">何天宇</div>
<div class="t" style="left:909.5px;top:962.335px;width:104.5px;text-align:center;color:#333;font-size:19.5px;line-height:22px;">稀土</div>
<div class="t" style="left:1026.8px;top:963.835px;width:47px;height:22px;background:#e74c3c;border-radius:3px;color:#fff;font-weight:bold;font-size:15px;line-height:22px;text-align:center">买涨</div>
<div class="t" style="left:1087.2px;top:961.135px;width:129.89999999999986px;text-align:center;color:#333;font-size:19.5px;line-height:22px;">164642.56</div>
<div class="t" style="left:1217.1px;top:961.135px;width:125.60000000000014px;text-align:center;color:#333;font-size:19.5px;line-height:22px;">0.00</div>
<div class="t" style="left:1342.7px;top:961.135px;width:109.0px;text-align:center;color:#333;font-size:19.5px;line-height:22px;">71.6697</div>
<div class="t" style="left:1451.7px;top:961.135px;width:97.0px;text-align:center;color:#333;font-size:19.5px;line-height:22px;">71.6767</div>
<div class="t" style="left:1548.7px;top:961.135px;width:209.89999999999986px;text-align:center;color:#333;font-size:19.5px;line-height:22px;">2024-09-03 21:03:44</div>
<div class="t" style="left:1758.6px;top:961.135px;width:210.9000000000001px;text-align:center;color:#333;font-size:19.5px;line-height:22px;">2024-09-03 21:11:44</div>
<div class="t" style="left:1969.5px;top:961.135px;width:74.90000000000009px;text-align:center;color:#333;font-size:19.5px;line-height:22px;">480/5</div>
<div class="t" style="left:2044.4px;top:961.135px;width:130.0px;text-align:center;color:#333;font-size:19.5px;line-height:22px;">172874.69</div>
<div class="t" style="left:2195px;top:963.835px;width:61px;height:23px;background:#e74c3c;border-radius:3px;color:#fff;font-weight:bold;font-size:15.5px;line-height:23px;text-align:center">已平仓</div>
<div class="a" style="left:2290px;top:958.335px;width:118px;height:30px;background:#18bc9c;border-radius:3px"></div>
<div class="a" style="left:2298px;top:965.835px"><svg width="15" height="15" viewBox="0 0 15 15" style="display:block;overflow:visible" ><path fill="#fff" fill-rule="evenodd" d="M7.5 0 A7.5 7.5 0 1 1 7.5 15 A7.5 7.5 0 1 1 7.5 0 Z M4.9 4.9 H10.1 V10.1 H4.9 Z"/></svg></div>
<div class="t" style="left:2317.5px;top:963.335px;color:#fff;font-size:16.5px;line-height:20px">关闭提示音</div>
<div class="a" style="left:2435px;top:958.335px;width:32px;height:30px;background:#18bc9c;border-radius:3px"></div>
<div class="a" style="left:2442.5px;top:965.335px"><svg width="16" height="16" viewBox="0 0 18 18" style="display:block;overflow:visible" ><path fill="#fff" d="M13.2 0.8 L17.2 4.8 L6 16 L0.6 17.4 L2 12 Z"/><path fill="none" stroke="#18bc9c" stroke-width="0.9" d="M2.6 12.6 L5.4 15.4 M11.4 2.6 L15.4 6.6"/></svg></div>
<div class="a" style="left:2472px;top:958.335px;width:30px;height:30px;background:#e74c3c;border-radius:3px"></div>
<div class="a" style="left:2480.5px;top:965.335px"><svg width="13" height="15" viewBox="0 0 16.5 18" style="display:block;overflow:visible" ><g fill="#fff"><rect x="0" y="2.6" width="16.5" height="1.9" rx="0.4"/><path d="M5.2 2.8 V1.4 Q5.2 0.2 6.4 0.2 H10.1 Q11.3 0.2 11.3 1.4 V2.8 H9.9 V1.5 H6.6 V2.8 Z"/><path d="M1.3 5.2 H15.2 L14.3 16.4 Q14.2 18 12.6 18 H3.9 Q2.3 18 2.2 16.4 Z"/></g><g fill="#e74c3c"><rect x="4.9" y="7.2" width="1.2" height="8.4"/><rect x="7.65" y="7.2" width="1.2" height="8.4"/><rect x="10.4" y="7.2" width="1.2" height="8.4"/></g></svg></div>
<div class="t" style="left:390px;top:1031px;font-size:19.5px;line-height:22px;color:#333;letter-spacing:-0.17px">显示第 1 到第 10 条记录，总共 7695 条记录 每页显示</div>
<div class="a" style="left:862px;top:1021px;width:74px;height:46px;background:#f4f4f4;border:1px solid #ddd;border-radius:4px"></div>
<div class="t" style="left:881px;top:1032px;font-size:18px;line-height:22px;color:#444">10</div>
<div class="a" style="left:906px;top:1041px"><svg width="12" height="6.5" viewBox="0 0 12 7" style="display:block"><path d="M0 7L6 0l6 7z" fill="#333"/></svg></div>
<div class="t" style="left:943px;top:1031px;font-size:19.5px;line-height:22px;color:#333">条记录</div>
<div class="a" style="left:1966.5px;top:1017.3px;width:549px;height:47.5px;border:1px solid #dcdcdc;border-radius:4px;background:#fafafa"></div>
<div class="t" style="left:1966.5px;top:1028.8px;width:94.5px;text-align:center;color:#666;font-size:19.5px;line-height:22px">上一页</div>
<div class="a" style="left:2061px;top:1017.3px;width:48.80000000000018px;height:47.5px;background:#2c3e50"></div>
<div class="a" style="left:2061px;top:1018.3px;width:1px;height:45.2px;background:#ddd"></div>
<div class="t" style="left:2061px;top:1028.8px;width:48.80000000000018px;text-align:center;color:#fff;font-size:19.5px;line-height:22px">1</div>
<div class="a" style="left:2109.8px;top:1018.3px;width:1px;height:45.2px;background:#ddd"></div>
<div class="t" style="left:2109.8px;top:1028.8px;width:46.69999999999982px;text-align:center;color:#666;font-size:19.5px;line-height:22px">2</div>
<div class="a" style="left:2156.5px;top:1018.3px;width:1px;height:45.2px;background:#ddd"></div>
<div class="t" style="left:2156.5px;top:1028.8px;width:46.90000000000009px;text-align:center;color:#666;font-size:19.5px;line-height:22px">3</div>
<div class="a" style="left:2203.4px;top:1018.3px;width:1px;height:45.2px;background:#ddd"></div>
<div class="t" style="left:2203.4px;top:1028.8px;width:47.19999999999982px;text-align:center;color:#666;font-size:19.5px;line-height:22px">4</div>
<div class="a" style="left:2250.6px;top:1018.3px;width:1px;height:45.2px;background:#ddd"></div>
<div class="t" style="left:2250.6px;top:1028.8px;width:47.70000000000027px;text-align:center;color:#666;font-size:19.5px;line-height:22px">5</div>
<div class="a" style="left:2298.3px;top:1018.3px;width:52.09999999999991px;height:45.2px;background:#fff"></div>
<div class="a" style="left:2298.3px;top:1018.3px;width:1px;height:45.2px;background:#ddd"></div>
<div class="t" style="left:2298.3px;top:1028.8px;width:52.09999999999991px;text-align:center;color:#666;font-size:19.5px;line-height:22px">...</div>
<div class="a" style="left:2350.4px;top:1018.3px;width:1px;height:45.2px;background:#ddd"></div>
<div class="t" style="left:2350.4px;top:1028.8px;width:70.29999999999973px;text-align:center;color:#666;font-size:19.5px;line-height:22px">770</div>
<div class="a" style="left:2420.7px;top:1018.3px;width:1px;height:45.2px;background:#ddd"></div>
<div class="t" style="left:2420.7px;top:1028.8px;width:94.70000000000027px;text-align:center;color:#666;font-size:19.5px;line-height:22px">下一页</div>
</body></html>
